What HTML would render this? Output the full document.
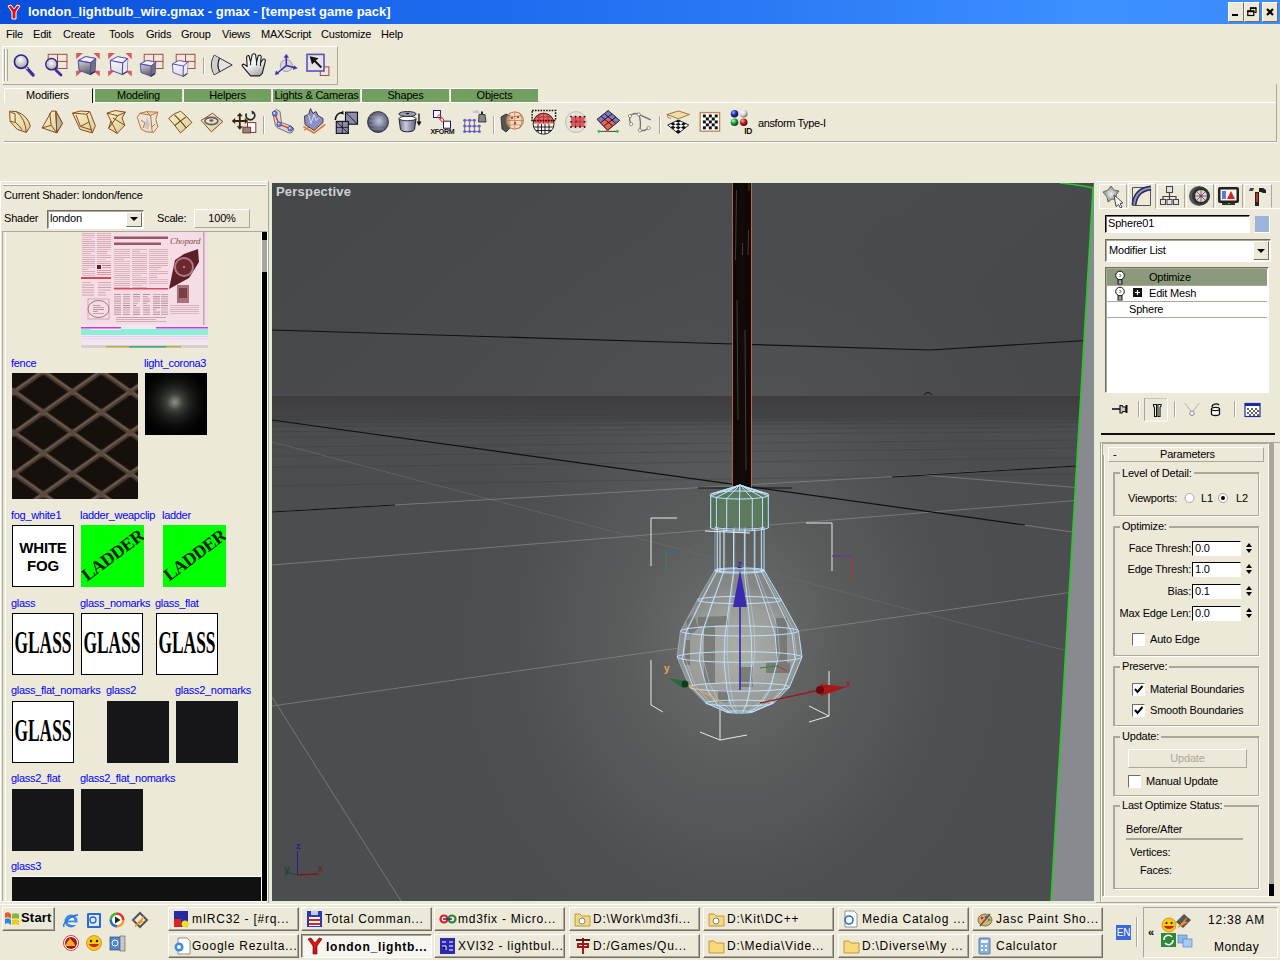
<!DOCTYPE html>
<html><head><meta charset="utf-8">
<style>
*{margin:0;padding:0;box-sizing:border-box}
html,body{width:1280px;height:960px;overflow:hidden;background:#ECE9D8;font-family:"Liberation Sans",sans-serif;font-size:11px;color:#000;position:relative;letter-spacing:-0.2px}
.a{position:absolute}
svg{display:block}
#title{left:0;top:0;width:1280px;height:24px;background:linear-gradient(90deg,#0a4ed9 0%,#1460e8 20%,#2a7af5 60%,#3d90ff 85%,#3b8cfc 100%)}
#title .t{left:28px;top:4px;color:#fff;font-weight:bold;font-size:13px;letter-spacing:0px;white-space:nowrap}
.wb{top:2px;width:16px;height:20px;background:#ECE9D8;border:1px solid;border-color:#fff #716f64 #716f64 #fff}
#menu span{position:absolute;top:28px;font-size:11px}
.tab{top:88px;width:88px;height:14px;background:#73a060;border-top:1px solid #fff;border-left:1px solid #fff;text-align:center;font-size:11px;line-height:13px;white-space:nowrap;letter-spacing:-0.2px}
#vp{left:272px;top:183px;width:822px;height:718px;background:#46484c;overflow:hidden}
.lbl{position:absolute;color:#0000ff;font-size:11px;white-space:nowrap;letter-spacing:-0.3px}
.lad{width:63px;height:62px;background:#00ff00;overflow:hidden}
.lad span{position:absolute;left:-10px;top:20px;width:84px;text-align:center;font-family:"Liberation Serif",serif;font-weight:bold;font-size:18px;color:#0a200a;transform:rotate(-37deg);letter-spacing:-0.5px}
.gls{width:62px;height:62px;background:#fff;border:1px solid #000;overflow:hidden}
.gls span{position:absolute;left:-40px;top:14px;width:140px;text-align:center;font-family:"Liberation Serif",serif;font-weight:bold;font-size:31px;line-height:30px;transform:scaleX(0.56);letter-spacing:0px;color:#000}
.drk{width:62px;height:62px;background:#161618}
.rtab{top:184px;width:28px;height:24px;border:1px solid;border-color:#fff #aca899 #ECE9D8 #fff}
.grp{left:1113px;width:147px;border:1px solid;border-color:#aca899 #fff #fff #aca899;box-shadow:1px 1px 0 #aca899 inset, -1px -1px 0 #aca899 inset}
.glbl{left:1120px;background:#ECE9D8;padding:0 2px}
.rl{right:89px;text-align:right;white-space:nowrap}
.sp{left:1192px;width:49px;height:15px;background:#fff;border:1px solid;border-color:#000 #fff #fff #000}
.spv{left:1195px}
.cb{width:13px;height:13px;background:#fff;border:1px solid;border-color:#716f64 #fff #fff #716f64}
.tbtn{width:131px;height:24px;background:#ECE9D8;border:1px solid;border-color:#fff #716f64 #716f64 #fff;box-shadow:inset -1px -1px 0 #aca899}
.tbtn.pr{background:#f6f5ef;border-color:#716f64 #fff #fff #716f64;box-shadow:inset 1px 1px 0 #aca899}
.tt{font-size:12px;white-space:nowrap;letter-spacing:0.75px}
</style></head><body>
<div id="title" class="a">
  <svg class="a" style="left:6px;top:4px" width="16" height="16" viewBox="0 0 16 16"><path d="M2 2l3-1 3 4 3-4 3 1-4 6v7h-4v-7z" fill="#e01010" stroke="#fff" stroke-width="1"/></svg>
  <div class="a t">london_lightbulb_wire.gmax - gmax - [tempest game pack]</div>
  <div class="a wb" style="left:1228px"></div>
  <div class="a wb" style="left:1244px"></div>
  <div class="a wb" style="left:1262px"></div>
  <svg class="a" style="left:1228px;top:2px" width="52" height="22" viewBox="1228 2 52 22"><rect x="1232" y="14" width="6" height="2" fill="#000"/>
  <path d="M1250.5 10.5v-2.5h5.5v4.5h-1.5" fill="none" stroke="#000" stroke-width="1.2"/><rect x="1250" y="7.3" width="6.3" height="1.6" fill="#000"/><rect x="1247.8" y="11" width="6" height="4.5" fill="#ECE9D8" stroke="#000" stroke-width="1.2"/><rect x="1247.2" y="10.4" width="7.2" height="1.8" fill="#000"/>
  <path d="M1267 9l6 6M1273 9l-6 6" stroke="#000" stroke-width="2.2"/></svg>
</div>
<div id="menu">
  <span style="left:6px">File</span><span style="left:33px">Edit</span><span style="left:63px">Create</span><span style="left:109px">Tools</span><span style="left:146px">Grids</span><span style="left:181px">Group</span><span style="left:222px">Views</span><span style="left:261px">MAXScript</span><span style="left:321px">Customize</span><span style="left:381px">Help</span>
</div>
<!-- toolbar -->
<div class="a" style="left:2px;top:46px;width:336px;height:39px;border:1px solid;border-color:#fff #aca899 #aca899 #fff"></div>
<div class="a" style="left:4px;top:49px;width:1px;height:32px;background:#aca899"></div>
<div class="a" style="left:5px;top:49px;width:1px;height:32px;background:#fff"></div>
<div class="a" style="left:7px;top:49px;width:1px;height:32px;background:#aca899"></div>
<svg class="a" style="left:0;top:44px" width="340" height="42" viewBox="0 44 340 42">
 <defs>
  <radialGradient id="gl" cx="0.45" cy="0.35" r="0.65"><stop offset="0" stop-color="#fafafa"/><stop offset="0.6" stop-color="#c8c8cc"/><stop offset="1" stop-color="#9a9aa4"/></radialGradient>
  <linearGradient id="cubeg" x1="0" y1="0" x2="0.3" y2="1"><stop offset="0" stop-color="#f0f0f4"/><stop offset="0.5" stop-color="#a8a8b0"/><stop offset="1" stop-color="#606068"/></linearGradient>
  <linearGradient id="cubew" x1="0" y1="0" x2="0.3" y2="1"><stop offset="0" stop-color="#ffffff"/><stop offset="1" stop-color="#dcdce4"/></linearGradient>
  <linearGradient id="hand" x1="0" y1="0" x2="0.5" y2="1"><stop offset="0" stop-color="#ffffff"/><stop offset="0.6" stop-color="#f0f0f0"/><stop offset="1" stop-color="#b0b0b0"/></linearGradient>
  <g id="cubeG"><path d="M0 3.9L7.4 0L17.6 1.9L16.8 14.8L12.1 18L0.8 13.7z" fill="url(#cubeg)" stroke="#5048b0" stroke-width="1"/><path d="M0 3.9L7.4 0L17.6 1.9L12.5 6.2z" fill="#f4f4f8" stroke="#5048b0" stroke-width="0.9"/><path d="M12.5 6.2L17.6 1.9L16.8 14.8L12.1 18z" fill="#707078"/><path d="M0 3.9L12.5 6.2L17.6 1.9M12.5 6.2L12.1 18" fill="none" stroke="#5048b0" stroke-width="1.1"/><path d="M12.1 18L16.8 14.8" stroke="#222" stroke-width="1.2"/></g>
  <g id="cubeW"><path d="M0 3.9L7.4 0L17.6 1.9L16.8 14.8L12.1 18L0.8 13.7z" fill="url(#cubew)" stroke="#5048b0" stroke-width="1"/><path d="M12.5 6.2L17.6 1.9L16.8 14.8L12.1 18z" fill="#e8e8ee"/><path d="M0 3.9L12.5 6.2L17.6 1.9M12.5 6.2L12.1 18" fill="none" stroke="#5048b0" stroke-width="1.1"/><path d="M12.1 18L16.8 14.8" stroke="#333" stroke-width="1.2"/></g>
  <g id="corn" fill="#d85a5a"><path d="M0 0h6.6l-6.6 6.3z"/><path d="M23.5 0h-6.3l6.3 6.3z"/><path d="M0 23.5v-5.8h6.3z"/><path d="M23.5 23.5v-5.8h-6.3z"/></g>
 </defs>
 <!-- 1 magnifier -->
 <line x1="26.9" y1="68.2" x2="33.2" y2="75.1" stroke="#3a30a0" stroke-width="3.2" stroke-linecap="round"/>
 <line x1="25.5" y1="66.8" x2="27.5" y2="69" stroke="#ddd" stroke-width="1.4"/>
 <circle cx="21.1" cy="61.7" r="6.7" fill="url(#gl)" stroke="#2a2490" stroke-width="1.6"/>
 <!-- 2 zoom all -->
 <g fill="none" stroke="#a84848" stroke-width="1"><rect x="48.2" y="54.3" width="18.8" height="14.2"/><line x1="57.5" y1="54.3" x2="57.5" y2="68.5"/><line x1="48.2" y1="61.4" x2="67" y2="61.4"/></g>
 <line x1="55.8" y1="69.9" x2="61" y2="75" stroke="#3a30a0" stroke-width="2.8" stroke-linecap="round"/>
 <circle cx="51.5" cy="64.2" r="5.7" fill="url(#gl)" fill-opacity="0.85" stroke="#2a2490" stroke-width="1.4"/>
 <!-- 3 cube extents -->
 <use href="#corn" x="76.2" y="53"/><use href="#cubeG" x="78.2" y="56.6"/>
 <!-- 4 white cube extents -->
 <use href="#corn" x="108.2" y="53"/><use href="#cubeW" x="110.2" y="56.6"/>
 <!-- 5 grid cube -->
 <g fill="none" stroke="#a84848" stroke-width="1"><rect x="144.2" y="54.3" width="18.8" height="14.2"/><line x1="153.6" y1="54.3" x2="153.6" y2="68.5"/><line x1="144.2" y1="61.4" x2="163" y2="61.4"/></g>
 <g transform="translate(140.3 60.5) scale(0.88)"><use href="#cubeG"/></g>
 <!-- 6 grid white cube -->
 <g fill="none" stroke="#a84848" stroke-width="1"><rect x="176.2" y="54.3" width="18.8" height="14.2"/><line x1="185.5" y1="54.3" x2="185.5" y2="68.5"/><line x1="176.2" y1="61.4" x2="195" y2="61.4"/></g>
 <g transform="translate(172.4 60.5) scale(0.88)"><use href="#cubeW"/></g>
 <!-- sep -->
 <line x1="203.5" y1="57" x2="203.5" y2="74" stroke="#aca899"/><line x1="204.5" y1="57" x2="204.5" y2="74" stroke="#fff"/>
 <!-- 7 cone -->
 <path d="M214.2 55.1L232.2 65L214.2 74.8Q208.5 65 214.2 55.1z" fill="#e2e2e2" stroke="#333" stroke-width="1"/>
 <path d="M214.2 55.6Q210.5 65 214.2 74.3L219.5 71.4Q217 65 219.5 58.5z" fill="#cfcfcf"/>
 <path d="M219.5 58.3Q216.5 65 219.5 71.7" fill="none" stroke="#222" stroke-width="1.3"/>
 <!-- 8 hand -->
 <path d="M250.6 75.9L242.6 66.4Q241.5 64.2 243.8 64.1L247.2 66.5L246.6 57.6Q246.9 55.2 248.9 55.5L250.6 62L252.2 54.9Q253.9 52.8 255.6 54.7L256.6 62L258.3 55.6Q260.5 54.4 261.2 56.6L260.5 63L263 59.2Q265.2 58.4 265.4 60.6L262.3 73.4L259.6 75.9z" fill="url(#hand)" stroke="#1a1a1a" stroke-width="1.1" stroke-linejoin="round"/>
 <path d="M250.6 62.3v3M256.6 62v3.5M260.5 63v3" stroke="#111" stroke-width="1"/>
 <!-- 9 axis -->
 <circle cx="286.3" cy="65.6" r="6" fill="#d6d6d6" stroke="#999" stroke-width="0.9"/>
 <g stroke="#3a30b0" stroke-width="1.5" fill="#3a30b0"><line x1="286.3" y1="65.6" x2="286.3" y2="57"/><line x1="286.3" y1="65.6" x2="295" y2="67.8"/><line x1="286.3" y1="65.6" x2="277.5" y2="73"/><path d="M286.3 54.2l-2.2 3.4h4.4z" stroke-width="0.5"/><path d="M297.3 68.1l-3.3-2.3-0.8 3.8z" stroke-width="0.5"/><path d="M275.2 74.7l1-3.8 2.6 2.8z" stroke-width="0.5"/></g>
 <!-- 10 select -->
 <rect x="320.3" y="66.9" width="8.6" height="8.6" fill="none" stroke="#a84848" stroke-width="1"/>
 <rect x="307" y="54.4" width="17" height="16.6" fill="#e4e4e4" stroke="#5a50c0" stroke-width="1.6"/>
 <path d="M309.7 56.2L318.5 58.2L315.8 60.6L322 66.8L320.6 68.2L314.4 62L312 64.6z" fill="#111"/>
</svg>
<!-- tabs -->
<div class="a" style="left:4px;top:88px;width:89px;height:15px;border-left:1px solid #fff;border-top:1px solid #fff;border-right:1px solid #111;background:#ECE9D8;z-index:2"></div>
<div class="a" style="left:26px;top:89px;font-size:11px;z-index:3">Modifiers</div>
<div class="a tab" style="left:94px">Modeling</div>
<div class="a tab" style="left:183px">Helpers</div>
<div class="a tab" style="left:272px">Lights &amp; Cameras</div>
<div class="a tab" style="left:361px">Shapes</div>
<div class="a tab" style="left:450px">Objects</div>
<div class="a" style="left:4px;top:102px;width:1272px;height:1px;background:#fff"></div>
<div class="a" style="left:4px;top:141px;width:1273px;height:1px;background:#aca899"></div>
<div class="a" style="left:4px;top:142px;width:1273px;height:1px;background:#fff"></div>
<div class="a" style="left:1276px;top:84px;width:1px;height:58px;background:#aca899"></div>
<div class="a" style="left:758px;top:117px;font-size:11px;white-space:nowrap;letter-spacing:-0.4px">ansform Type-I</div>

<svg class="a" style="left:0;top:104px" width="760" height="37" viewBox="0 104 760 37">
 <defs>
  <linearGradient id="yel" x1="0" y1="0" x2="1" y2="1"><stop offset="0" stop-color="#fbf3c8"/><stop offset="1" stop-color="#d8cc98"/></linearGradient>
  <radialGradient id="sph" cx="0.4" cy="0.35" r="0.7"><stop offset="0" stop-color="#d8dae6"/><stop offset="1" stop-color="#3c3e50"/></radialGradient>
 </defs>
 <g stroke="#8a4a20" stroke-width="1" fill="url(#yel)">
  <!-- bend -->
  <path d="M9.6 111.1L16.2 111.6Q28 115.5 30.4 126.3L26.3 132.4L17.2 129.4Q13 125 10.1 121.3z"/>
  <path d="M16.2 111.6Q25.5 118.5 26.3 132.4M10.6 112.5L15 113.5L15.2 122.3Q20 126 22 129.8M15.2 122.3L10.1 121.3" fill="none"/>
  <!-- taper -->
  <path d="M51.7 111.1L55.8 111.1L62.4 123.3L56.8 132.9L42.1 127.9z"/>
  <path d="M55.8 111.1L62.4 123.3L56.8 132.9z" fill="#b8b8a8"/>
  <path d="M49.7 113.1L51.2 125.3L42.1 127.9M51.2 125.3L56.8 132.9M55.8 111.1L56.8 132.9" fill="none"/>
  <!-- skew box -->
  <path d="M72.5 113.1L80.1 111.1L89.8 111.6L95.4 125.8L92.3 132.9L80.1 129.4z"/>
  <path d="M72.5 113.1L86.7 114.2L89.8 111.6M86.7 114.2L92.3 132.9M76 115L80.5 126.5L92 130M80.5 126.5L89 122" fill="none"/>
  <!-- twist -->
  <path d="M107 113.1L115.2 110.6L125.3 112.1L122 118L124.8 125.3L117.2 133.4L108.6 128.4L111 121z"/>
  <path d="M107 113.1L117.7 115.7L125.3 112.1M117.7 115.7L108.6 128.4M113 118L124.8 125.3M111 121L117.2 133.4" fill="none"/>
  <!-- noise -->
  <path d="M137.2 117.4L139.8 113.3L146.5 111.7L157.8 112.2L155.8 119.5L157.8 126.7L153.7 132.4L146.5 131.8L141.3 129.3L139.3 123.6z" fill="#e8e6d8" stroke="#c07030"/>
  <path d="M146.5 111.7L150.6 115.3L152.2 131.8M139.8 113.3L150.6 115.3L157.8 112.2M141 120l4 3-2 5M155 124l-3 3" fill="none" stroke="#c07030"/>
  <path d="M147 117l3 8-2 5l-4-3z" fill="#c8c8c0" stroke="none"/>
  <!-- ffd -->
  <path d="M168.7 118.4Q174 113 180.5 111.2Q187 116 191.9 122.6Q186 128 180.5 132.9Q174 124 168.7 118.4z"/>
  <path d="M174.5 114.8Q180 120 186.2 127.8M186.2 116.9Q180 121 174.6 125.7" fill="none" stroke="#6a4020" stroke-width="1.1"/>
  <!-- ripple -->
  <path d="M201.1 120.5L212.5 113.3L222.8 121.5L211.4 131.8z"/>
 </g>
 <ellipse cx="211.4" cy="121" rx="6.5" ry="3.6" fill="none" stroke="#585878" stroke-width="1.6"/>
 <ellipse cx="211.4" cy="120.5" rx="2" ry="1.2" fill="#585878"/>
 <!-- xform -->
 <g stroke="#3a2410" stroke-width="1.8" fill="#3a2410"><path d="M233.6 121h12.6M239.8 114.8v13" fill="none"/><path d="M232 121l3-2.5v5z" stroke-width="0.5"/><path d="M248 121l-3-2.5v5z" stroke-width="0.5"/><path d="M239.8 113l-2.5 3h5z" stroke-width="0.5"/><path d="M239.8 129.5l-2.5-3h5z" stroke-width="0.5"/></g>
 <path d="M246.5 113.5A4.3 4.3 0 1 0 253.5 112.5" fill="none" stroke="#222" stroke-width="1.6"/><path d="M251.5 110.5l3 1.5-2.5 2.5z" fill="#222"/>
 <rect x="247.5" y="122.6" width="8.3" height="9.8" fill="#fff" stroke="#8a3030" stroke-width="1"/><rect x="242.9" y="127.2" width="7.7" height="5.7" fill="#8a8a78" stroke="#8a3030" stroke-width="1"/>
 <line x1="263.5" y1="116" x2="263.5" y2="134" stroke="#aca899"/><line x1="264.5" y1="116" x2="264.5" y2="134" stroke="#fff"/>
 <!-- linked xform bones -->
 <path d="M272.5 112l4-2.5 3.5 2 1.5 11 9.5 3.5 3 3-2 3.5-3 .5-12-5.5-1.5-2z" fill="#d8d8d0" stroke="#666" stroke-width="0.9"/>
 <path d="M274.8 113.7l4.3 10.6 11.2 4.4" fill="none" stroke="#e03030" stroke-width="1.4"/>
 <g fill="#7878e8" stroke="#2a2a80" stroke-width="0.6"><circle cx="274.8" cy="113.7" r="2.4"/><circle cx="279.1" cy="124.3" r="2.4"/><circle cx="290.3" cy="128.7" r="2.4"/></g>
 <g fill="#e8e8ff"><circle cx="274.2" cy="113" r="0.9"/><circle cx="278.5" cy="123.6" r="0.9"/><circle cx="289.7" cy="128" r="0.9"/></g>
 <!-- displace -->
 <path d="M303.4 126.5l10.5 6.5 11.3-8.5" fill="none" stroke="#e07a30" stroke-width="1.6"/><path d="M304 130.2l5-3" stroke="#e07a30" stroke-width="1.3"/>
 <path d="M304.5 116l4-1.5 2-6 2.5 5 3-2 2 4 5 3v4l-9 8-9-6z" fill="#8c90c0" stroke="#222" stroke-width="0.8"/>
 <path d="M308.5 114.5l2.5 9 3-9 2 6 3-3" fill="none" stroke="#d8dcf8" stroke-width="1"/>
 <!-- mesh select -->
 <path d="M335.3 120c0-4 3-7.5 6.5-7.5" fill="none" stroke="#111" stroke-width="1.5"/><path d="M343.2 110.6l0.5 4-3.5-1z" fill="#111"/>
 <rect x="345.5" y="112.2" width="12" height="12" fill="#8a8cae" stroke="#111" stroke-width="1.1"/><path d="M345.5 112.2l12 12" stroke="#111" stroke-width="0.9"/>
 <rect x="336.3" y="121.4" width="12" height="12" fill="#8a8cae" stroke="#111" stroke-width="1.1"/><path d="M342.3 121.4v12M336.3 127.4h12M336.3 121.4l6 6M342.3 127.4l6 6" stroke="#111" stroke-width="0.8"/>
 <!-- sphere -->
 <defs><radialGradient id="sph2" cx="0.55" cy="0.45" r="0.6"><stop offset="0" stop-color="#c8cadc"/><stop offset="0.5" stop-color="#7a7c98"/><stop offset="1" stop-color="#3a3c50"/></radialGradient></defs>
 <circle cx="378" cy="122" r="10.5" fill="url(#sph2)" stroke="#2a2a3a" stroke-width="0.8"/>
 <path d="M370 117h14M369 121h17M369 125h17M371 129h13" stroke="#b0b2c8" stroke-width="0.6" opacity="0.6"/>
 <!-- cylinder -->
 <defs><linearGradient id="cyl" x1="0" y1="0" x2="1" y2="0"><stop offset="0" stop-color="#6a6c88"/><stop offset="0.4" stop-color="#c8cadc"/><stop offset="1" stop-color="#5a5c78"/></linearGradient></defs>
 <path d="M399 118.5l1.5 11c1 3 13 3 14 0l1.5-11z" fill="url(#cyl)" stroke="#222" stroke-width="1"/>
 <ellipse cx="407.5" cy="118.5" rx="8.5" ry="2.2" fill="#fff" stroke="#222" stroke-width="0.9"/>
 <ellipse cx="407.5" cy="114" rx="8.6" ry="2.5" fill="#9a9cb8" stroke="#222" stroke-width="0.9"/><ellipse cx="407.5" cy="113.6" rx="2" ry="0.8" fill="#222"/>
 <path d="M419 113.5v9" stroke="#111" stroke-width="1.3"/><path d="M416.5 121.5l2.5 4.5 2.5-4.5z" fill="#111"/>
 <!-- xform chain -->
 <rect x="433.5" y="110.5" width="6.9" height="7" fill="#fff" stroke="#1a1a70" stroke-width="1"/><rect x="443.5" y="121.2" width="7" height="7" fill="#fff" stroke="#1a1a70" stroke-width="1"/>
 <ellipse cx="439.5" cy="117" rx="1.5" ry="2.2" transform="rotate(-40 439.5 117)" fill="none" stroke="#d03030" stroke-width="0.9"/><ellipse cx="442" cy="119.8" rx="1.5" ry="2.2" transform="rotate(-40 442 119.8)" fill="none" stroke="#d03030" stroke-width="0.9"/>
 <text x="430.5" y="134" font-size="7" font-weight="bold" font-family="Liberation Sans" letter-spacing="-0.3" fill="#111">XFORM</text>
 <!-- vol select -->
 <path d="M471 112l7 -2 2 4z" fill="#b8b8e8" opacity="0.8"/>
 <path d="M464.7 120.2h9.7M464.7 126.1h14.6M464.7 131.5h14.6M464.7 120.2v11.3M469.6 120.2v11.3M474.4 120.2v11.3M479.3 126.1v5.4" stroke="#222" stroke-width="0.6"/>
 <g fill="#6a5ae0"><circle cx="464.7" cy="120.2" r="1.5"/><circle cx="469.6" cy="120.2" r="1.5"/><circle cx="474.4" cy="120.2" r="1.5"/><circle cx="464.7" cy="126.1" r="1.5"/><circle cx="469.6" cy="126.1" r="1.5"/><circle cx="474.4" cy="126.1" r="1.5"/><circle cx="479.3" cy="126.1" r="1.5"/><circle cx="464.7" cy="131.5" r="1.5"/><circle cx="469.6" cy="131.5" r="1.5"/><circle cx="474.4" cy="131.5" r="1.5"/><circle cx="479.3" cy="131.5" r="1.5"/></g>
 <path d="M479 114.5h6l1 7.5h-7.5z" fill="#888" stroke="#222" stroke-width="0.8"/><rect x="481" y="111.5" width="2" height="2.5" fill="#222"/>
 <line x1="493.5" y1="116" x2="493.5" y2="134" stroke="#aca899"/><line x1="494.5" y1="116" x2="494.5" y2="134" stroke="#fff"/>
 <!-- uvw map sphere -->
 <path d="M501 117l5-3 4 2v12l-4 4-4-3z" fill="#555" stroke="#222" stroke-width="0.8"/>
 <circle cx="514.8" cy="120.5" r="8.6" fill="#e8dcc8" fill-opacity="0.7" stroke="#c07030" stroke-width="1"/>
 <path d="M506.2 120.5h17.2M514.8 111.9v17.2M508 115c4 2 10 2 13.5 0M508 126c4-2 10-2 13.5 0M510 112.5c-3 5-3 11 0 16M519.5 112.5c3 5 3 11 0 16" fill="none" stroke="#c07030" stroke-width="0.7"/>
 <g fill="#e03030"><circle cx="512" cy="118" r="1.2"/><circle cx="518" cy="117" r="1.2"/><circle cx="515" cy="123" r="1.2"/></g>
 <!-- unwrap sphere -->
 <defs><clipPath id="uwT"><path d="M533.1 123.7a10.5 10.5 0 0 1 21 0z"/></clipPath><clipPath id="uwB"><path d="M533.1 123.7a10.5 10.5 0 0 0 21 0z"/></clipPath></defs>
 <circle cx="543.6" cy="123.7" r="10.5" fill="#e86868" clip-path="url(#uwT)"/>
 <circle cx="543.6" cy="123.7" r="10.5" fill="#f4f4f4" clip-path="url(#uwB)"/>
 <g clip-path="url(#uwT)" stroke="#c02020" stroke-width="0.8" fill="none"><path d="M533 117h21M533 121h21M539 113v11M543.6 113v11M548 113v11"/></g>
 <g clip-path="url(#uwB)" stroke="#111" stroke-width="0.9" fill="none"><path d="M533 127h21M533 130.5h21M538 124v11M541.5 124v11M545 124v11M549 124v11"/></g>
 <circle cx="543.6" cy="123.7" r="10.5" fill="none" stroke="#111" stroke-width="0.9"/>
 <rect x="532.1" y="110.6" width="23.5" height="9.8" fill="none" stroke="#111" stroke-width="1.5" stroke-dasharray="1.6 1.2"/>
 <!-- mesh smooth -->
 <circle cx="575.9" cy="122" r="10.4" fill="#e8e6dc" stroke="#b0b0a8" stroke-width="0.8"/>
 <path d="M576 112v20M566 122h20M568 116h16M568 128h16" stroke="#c8c8c0" stroke-width="0.5"/>
 <rect x="571" y="116.6" width="13.6" height="10.4" fill="#e85858"/>
 <path d="M575.5 116.6v10.4M580 116.6v10.4M571 121.8h13.6" stroke="#a03030" stroke-width="0.6"/>
 <g fill="#111"><circle cx="571" cy="116.6" r="0.9"/><circle cx="575.5" cy="116.6" r="0.9"/><circle cx="580" cy="116.6" r="0.9"/><circle cx="584.6" cy="116.6" r="0.9"/><circle cx="571" cy="121.8" r="0.9"/><circle cx="584.6" cy="121.8" r="0.9"/><circle cx="571" cy="127" r="0.9"/><circle cx="575.5" cy="127" r="0.9"/><circle cx="580" cy="127" r="0.9"/><circle cx="584.6" cy="127" r="0.9"/></g>
 <circle cx="576.5" cy="121.5" r="1" fill="#3030e0"/>
 <!-- patch -->
 <path d="M597.2 119.3L608.2 110.6L619.6 120.4L607.6 130.3z" fill="#e86060" stroke="#222" stroke-width="0.8"/>
 <path d="M597.2 119.3L608.2 110.6L619.6 120.4L616 123.6L608.2 116.8L600.9 122.4z" fill="#7a78c8"/>
 <path d="M601 116.2L612.5 125.8M604.7 113.8L616 123.6M600.9 122.4L612 113.9M604.5 125.5L615.9 117.1" stroke="#111" stroke-width="0.9"/>
 <path d="M597.2 119.3L608.2 110.6L619.6 120.4L607.6 130.3z" fill="none" stroke="#222" stroke-width="0.8"/>
 <path d="M598.9 131.4h18.5" stroke="#333" stroke-width="0.9"/><circle cx="598.9" cy="131.4" r="1.4" fill="#30c030"/><circle cx="617.4" cy="131.4" r="1.4" fill="#30c030"/><circle cx="607.6" cy="130.8" r="1.4" fill="#e04040"/>
 <!-- spline -->
 <path d="M630 116c3-3 6-3 8.8-1.6M630 116c-1 3 0 6 1.1 8.2M638.8 114.4c2 5 2 10 1.1 15.9M639.9 130.3c3 1 6 0 8.7-2.3M638.8 114.4l12 5.5" fill="none" stroke="#707070" stroke-width="1.3"/>
 <g fill="#fff" stroke="#808080" stroke-width="0.9"><circle cx="630" cy="116" r="1.6"/><circle cx="638.8" cy="114.4" r="1.6"/><circle cx="631.1" cy="124.2" r="1.6"/><circle cx="639.9" cy="130.3" r="1.6"/><circle cx="648.6" cy="128" r="1.6"/></g>
 <line x1="659.5" y1="116" x2="659.5" y2="134" stroke="#aca899"/><line x1="660.5" y1="116" x2="660.5" y2="134" stroke="#fff"/>
 <!-- layers -->
 <path d="M667.7 125L678.3 120L688.8 125L678.3 133.5z" fill="#fff" stroke="#111" stroke-width="0.9"/>
 <g fill="#111"><path d="M678.3 120.0 L680.9 121.2 L678.3 122.7 L675.6 121.2 z"/><path d="M673.0 122.5 L675.6 124.2 L673.0 125.7 L670.4 123.8 z"/><path d="M678.3 122.7 L680.9 124.2 L678.2 125.9 L675.6 124.2 z"/><path d="M673.0 125.7 L675.6 127.6 L673.0 129.2 L670.3 127.1 z"/><path d="M683.5 122.5 L686.2 123.8 L683.5 125.7 L680.9 124.2 z"/><path d="M678.2 125.9 L680.9 127.6 L678.2 129.5 L675.6 127.6 z"/><path d="M683.5 125.7 L686.1 127.1 L683.5 129.2 L680.9 127.6 z"/><path d="M678.2 129.5 L680.9 131.4 L678.2 133.5 L675.6 131.4 z"/></g>
 <path d="M667 114.5L678.3 111L689.5 114.5L678.3 118.8z" fill="#f4dca8" stroke="#9a6a30" stroke-width="0.9"/><path d="M667 114.5l1 3 3 1" fill="none" stroke="#9a6a30" stroke-width="0.8"/>
 <!-- checker -->
 <rect x="700.2" y="112.6" width="19.4" height="18.6" fill="#fff" stroke="#c08a60" stroke-width="1.4"/>
 <g fill="#111"><rect x="702.90" y="114.50" width="2.96" height="2.96"/><rect x="702.90" y="120.42" width="2.96" height="2.96"/><rect x="702.90" y="126.34" width="2.96" height="2.96"/><rect x="705.86" y="117.46" width="2.96" height="2.96"/><rect x="705.86" y="123.38" width="2.96" height="2.96"/><rect x="708.82" y="114.50" width="2.96" height="2.96"/><rect x="708.82" y="120.42" width="2.96" height="2.96"/><rect x="708.82" y="126.34" width="2.96" height="2.96"/><rect x="711.78" y="117.46" width="2.96" height="2.96"/><rect x="711.78" y="123.38" width="2.96" height="2.96"/><rect x="714.74" y="114.50" width="2.96" height="2.96"/><rect x="714.74" y="120.42" width="2.96" height="2.96"/><rect x="714.74" y="126.34" width="2.96" height="2.96"/></g>
 <!-- material id -->
 <defs>
  <radialGradient id="bB" cx="0.35" cy="0.3" r="0.7"><stop offset="0" stop-color="#a0b0ff"/><stop offset="0.5" stop-color="#2030b0"/><stop offset="1" stop-color="#081050"/></radialGradient>
  <radialGradient id="bW" cx="0.35" cy="0.3" r="0.7"><stop offset="0" stop-color="#fff"/><stop offset="0.6" stop-color="#d0d0d0"/><stop offset="1" stop-color="#707070"/></radialGradient>
  <radialGradient id="bG" cx="0.35" cy="0.3" r="0.7"><stop offset="0" stop-color="#b0ffc0"/><stop offset="0.5" stop-color="#20a040"/><stop offset="1" stop-color="#084018"/></radialGradient>
  <radialGradient id="bR" cx="0.35" cy="0.3" r="0.7"><stop offset="0" stop-color="#ffb0b0"/><stop offset="0.5" stop-color="#c02020"/><stop offset="1" stop-color="#500808"/></radialGradient>
 </defs>
 <circle cx="734.5" cy="113.8" r="3.8" fill="url(#bB)"/><circle cx="743.7" cy="113.8" r="3.8" fill="url(#bW)"/>
 <circle cx="734.5" cy="122.3" r="3.8" fill="url(#bG)"/><circle cx="743.7" cy="122.3" r="3.8" fill="url(#bR)"/>
 <text x="744.2" y="134" font-size="8.5" font-weight="bold" font-family="Liberation Sans" fill="#111">ID</text>
</svg>

<!-- left panel frame -->
<div class="a" style="left:0;top:181px;width:269px;height:1px;background:#fff"></div>
<div class="a" style="left:0;top:181px;width:1px;height:722px;background:#fff"></div>
<div class="a" style="left:268px;top:181px;width:1px;height:722px;background:#aca899"></div>
<div class="a" style="left:3px;top:184px;width:263px;height:1px;background:#fff"></div>
<div class="a" style="left:3px;top:185px;width:263px;height:1px;background:#aca899"></div>
<div class="a" style="left:4px;top:189px;white-space:nowrap">Current Shader: london/fence</div>
<div class="a" style="left:4px;top:212px">Shader</div>
<div class="a" style="left:47px;top:210px;width:97px;height:19px;background:#fff;border:1px solid;border-color:#716f64 #fff #fff #716f64;box-shadow:inset 1px 1px 0 #aca899"></div>
<div class="a" style="left:50px;top:212px">london</div>
<div class="a" style="left:126px;top:212px;width:16px;height:15px;background:#ECE9D8;border:1px solid;border-color:#fff #716f64 #716f64 #fff"></div>
<svg class="a" style="left:130px;top:217px" width="9" height="5"><path d="M0 0h8l-4 4z" fill="#000"/></svg>
<div class="a" style="left:157px;top:212px">Scale:</div>
<div class="a" style="left:194px;top:209px;width:56px;height:19px;border:1px solid;border-color:#fff #aca899 #aca899 #fff;text-align:center;line-height:17px">100%</div>
<!-- list frame -->
<div class="a" style="left:2px;top:231px;width:265px;height:1px;background:#aca899"></div>
<div class="a" style="left:2px;top:231px;width:1px;height:671px;background:#aca899"></div>
<div class="a" style="left:5px;top:232px;width:1px;height:669px;background:#fff"></div>
<div class="a" style="left:2px;top:901px;width:265px;height:1px;background:#fff"></div>
<div class="a" style="left:261px;top:232px;width:1px;height:669px;background:#fff"></div>
<div class="a" style="left:262px;top:232px;width:5px;height:669px;background:#000"></div>
<div class="a" style="left:262px;top:240px;width:5px;height:32px;background:#a8a698"></div>
<div class="a" style="left:267px;top:232px;width:1px;height:669px;background:#fff"></div>
<!-- clip area -->
<div class="a" style="left:6px;top:232px;width:255px;height:669px;overflow:hidden">
 <div class="a" style="left:-6px;top:-232px;width:270px;height:1000px">
  <!-- newspaper -->
  <div class="a" style="left:81px;top:232px;width:127px;height:116px;overflow:hidden"><svg width="127" height="116" viewBox="0 0 127 116"><rect width="127" height="116" fill="#f6dce4"/><rect x="1.0" y="1.0" width="13.0" height="1" fill="#c8949f" opacity="0.61"/><rect x="1.0" y="3.0" width="13.0" height="1" fill="#c8949f" opacity="0.63"/><rect x="1.0" y="5.0" width="13.0" height="1" fill="#c8949f" opacity="0.47"/><rect x="1.0" y="7.0" width="9.6" height="1" fill="#c8949f" opacity="0.53"/><rect x="1.0" y="9.0" width="13.0" height="1" fill="#c8949f" opacity="0.75"/><rect x="1.0" y="11.0" width="13.0" height="1" fill="#c8949f" opacity="0.70"/><rect x="1.0" y="13.0" width="13.0" height="1" fill="#c8949f" opacity="0.64"/><rect x="1.0" y="15.0" width="13.0" height="1" fill="#c8949f" opacity="0.64"/><rect x="1.0" y="17.0" width="13.0" height="1" fill="#c8949f" opacity="0.61"/><rect x="1.0" y="19.0" width="13.0" height="1" fill="#c8949f" opacity="0.65"/><rect x="1.0" y="21.0" width="9.1" height="1" fill="#c8949f" opacity="0.63"/><rect x="1.0" y="23.0" width="13.0" height="1" fill="#c8949f" opacity="0.46"/><rect x="1.0" y="25.0" width="13.0" height="1" fill="#c8949f" opacity="0.59"/><rect x="1.0" y="27.0" width="13.0" height="1" fill="#c8949f" opacity="0.71"/><rect x="1.0" y="29.0" width="13.0" height="1" fill="#c8949f" opacity="0.73"/><rect x="1.0" y="31.0" width="13.0" height="1" fill="#c8949f" opacity="0.69"/><rect x="1.0" y="33.0" width="13.0" height="1" fill="#c8949f" opacity="0.73"/><rect x="1.0" y="35.0" width="13.0" height="1" fill="#c8949f" opacity="0.48"/><rect x="1.0" y="37.0" width="6.3" height="1" fill="#c8949f" opacity="0.74"/><rect x="1.0" y="39.0" width="13.0" height="1" fill="#c8949f" opacity="0.64"/><rect x="1.0" y="41.0" width="13.0" height="1" fill="#c8949f" opacity="0.60"/><rect x="1.0" y="43.0" width="13.0" height="1" fill="#c8949f" opacity="0.56"/><rect x="16.0" y="1.0" width="14.0" height="1" fill="#c8949f" opacity="0.63"/><rect x="16.0" y="3.0" width="14.0" height="1" fill="#c8949f" opacity="0.65"/><rect x="16.0" y="5.0" width="14.0" height="1" fill="#c8949f" opacity="0.71"/><rect x="16.0" y="7.0" width="14.0" height="1" fill="#c8949f" opacity="0.65"/><rect x="16.0" y="9.0" width="14.0" height="1" fill="#c8949f" opacity="0.71"/><rect x="16.0" y="11.0" width="14.0" height="1" fill="#c8949f" opacity="0.72"/><rect x="16.0" y="13.0" width="14.0" height="1" fill="#c8949f" opacity="0.66"/><rect x="16.0" y="15.0" width="14.0" height="1" fill="#c8949f" opacity="0.70"/><rect x="16.0" y="17.0" width="14.0" height="1" fill="#c8949f" opacity="0.54"/><rect x="16.0" y="19.0" width="10.4" height="1" fill="#c8949f" opacity="0.75"/><rect x="16.0" y="21.0" width="10.1" height="1" fill="#c8949f" opacity="0.57"/><rect x="16.0" y="23.0" width="14.0" height="1" fill="#c8949f" opacity="0.54"/><rect x="16.0" y="25.0" width="14.0" height="1" fill="#c8949f" opacity="0.71"/><rect x="16.0" y="27.0" width="9.0" height="1" fill="#c8949f" opacity="0.46"/><rect x="16.0" y="29.0" width="14.0" height="1" fill="#c8949f" opacity="0.55"/><rect x="16.0" y="31.0" width="14.0" height="1" fill="#c8949f" opacity="0.74"/><rect x="16" y="33" width="4" height="4" fill="#5a2030"/><rect x="21.0" y="33.0" width="9.0" height="1" fill="#b06070" opacity="0.75"/><rect x="21.0" y="35.0" width="9.0" height="1" fill="#b06070" opacity="0.47"/><rect x="16.0" y="38.0" width="14.0" height="1" fill="#c05868" opacity="0.46"/><rect x="16.0" y="40.0" width="14.0" height="1" fill="#c05868" opacity="0.57"/><rect x="16.0" y="42.0" width="14.0" height="1" fill="#c05868" opacity="0.50"/><rect x="0" y="45" width="30" height="2" fill="#d84858"/><rect x="1.0" y="50.0" width="9.0" height="1" fill="#b88a96" opacity="0.54"/><rect x="1.0" y="52.5" width="12.0" height="1" fill="#b88a96" opacity="0.72"/><rect x="1.0" y="55.0" width="12.0" height="1" fill="#b88a96" opacity="0.59"/><rect x="1.0" y="57.5" width="12.0" height="1" fill="#b88a96" opacity="0.64"/><rect x="1.0" y="60.0" width="12.0" height="1" fill="#b88a96" opacity="0.62"/><rect x="1.0" y="62.5" width="12.0" height="1" fill="#b88a96" opacity="0.73"/><rect x="17.0" y="50.0" width="13.0" height="1" fill="#b88a96" opacity="0.58"/><rect x="17.0" y="52.5" width="13.0" height="1" fill="#b88a96" opacity="0.52"/><rect x="17.0" y="55.0" width="13.0" height="1" fill="#b88a96" opacity="0.74"/><rect x="17.0" y="57.5" width="13.0" height="1" fill="#b88a96" opacity="0.61"/><rect x="17.0" y="60.0" width="7.4" height="1" fill="#b88a96" opacity="0.62"/><rect x="17.0" y="62.5" width="8.4" height="1" fill="#b88a96" opacity="0.64"/><ellipse cx="17.5" cy="77" rx="10.5" ry="8.5" fill="none" stroke="#8a5a66" stroke-width="0.8"/><rect x="12.0" y="73.0" width="7.2" height="1" fill="#9a6a76" opacity="0.59"/><rect x="12.0" y="75.0" width="11.0" height="1" fill="#9a6a76" opacity="0.56"/><rect x="12.0" y="77.0" width="11.0" height="1" fill="#9a6a76" opacity="0.67"/><rect x="12.0" y="79.0" width="4.7" height="1" fill="#9a6a76" opacity="0.65"/><rect x="12.0" y="81.0" width="11.0" height="1" fill="#9a6a76" opacity="0.53"/><rect x="7" y="67" width="21" height="20" fill="none" stroke="#b08a94" stroke-width="0.6"/><g fill="#8a4050" opacity="0.85"><rect x="33" y="4.5" width="54" height="2.5"/><rect x="33" y="10.5" width="47" height="2.5"/></g><rect x="33.0" y="17.0" width="16.0" height="1" fill="#c8949f" opacity="0.63"/><rect x="33.0" y="19.0" width="16.0" height="1" fill="#c8949f" opacity="0.56"/><rect x="33.0" y="21.0" width="16.0" height="1" fill="#c8949f" opacity="0.56"/><rect x="33.0" y="23.0" width="16.0" height="1" fill="#c8949f" opacity="0.54"/><rect x="33.0" y="25.0" width="16.0" height="1" fill="#c8949f" opacity="0.68"/><rect x="33.0" y="27.0" width="10.0" height="1" fill="#c8949f" opacity="0.67"/><rect x="33.0" y="29.0" width="16.0" height="1" fill="#c8949f" opacity="0.52"/><rect x="33.0" y="31.0" width="16.0" height="1" fill="#c8949f" opacity="0.52"/><rect x="33.0" y="33.0" width="16.0" height="1" fill="#c8949f" opacity="0.58"/><rect x="33.0" y="35.0" width="16.0" height="1" fill="#c8949f" opacity="0.48"/><rect x="33.0" y="37.0" width="16.0" height="1" fill="#c8949f" opacity="0.55"/><rect x="33.0" y="39.0" width="16.0" height="1" fill="#c8949f" opacity="0.58"/><rect x="33.0" y="41.0" width="16.0" height="1" fill="#c8949f" opacity="0.50"/><rect x="33.0" y="43.0" width="16.0" height="1" fill="#c8949f" opacity="0.65"/><rect x="33.0" y="45.0" width="16.0" height="1" fill="#c8949f" opacity="0.59"/><rect x="33.0" y="47.0" width="16.0" height="1" fill="#c8949f" opacity="0.49"/><rect x="33.0" y="49.0" width="16.0" height="1" fill="#c8949f" opacity="0.51"/><rect x="33.0" y="51.0" width="16.0" height="1" fill="#c8949f" opacity="0.70"/><rect x="33.0" y="53.0" width="16.0" height="1" fill="#c8949f" opacity="0.53"/><rect x="33.0" y="55.0" width="16.0" height="1" fill="#c8949f" opacity="0.64"/><rect x="51.0" y="17.0" width="15.0" height="1" fill="#c8949f" opacity="0.55"/><rect x="51.0" y="19.0" width="7.8" height="1" fill="#c8949f" opacity="0.69"/><rect x="51.0" y="21.0" width="15.0" height="1" fill="#c8949f" opacity="0.55"/><rect x="51.0" y="23.0" width="15.0" height="1" fill="#c8949f" opacity="0.58"/><rect x="51.0" y="25.0" width="15.0" height="1" fill="#c8949f" opacity="0.73"/><rect x="51.0" y="27.0" width="15.0" height="1" fill="#c8949f" opacity="0.45"/><rect x="51.0" y="29.0" width="15.0" height="1" fill="#c8949f" opacity="0.71"/><rect x="51.0" y="31.0" width="15.0" height="1" fill="#c8949f" opacity="0.58"/><rect x="51.0" y="33.0" width="15.0" height="1" fill="#c8949f" opacity="0.73"/><rect x="51.0" y="35.0" width="15.0" height="1" fill="#c8949f" opacity="0.67"/><rect x="51.0" y="37.0" width="15.0" height="1" fill="#c8949f" opacity="0.65"/><rect x="51.0" y="39.0" width="15.0" height="1" fill="#c8949f" opacity="0.54"/><rect x="51.0" y="41.0" width="15.0" height="1" fill="#c8949f" opacity="0.52"/><rect x="51.0" y="43.0" width="9.5" height="1" fill="#c8949f" opacity="0.54"/><rect x="51.0" y="45.0" width="15.0" height="1" fill="#c8949f" opacity="0.46"/><rect x="51.0" y="47.0" width="15.0" height="1" fill="#c8949f" opacity="0.66"/><rect x="51.0" y="49.0" width="15.0" height="1" fill="#c8949f" opacity="0.72"/><rect x="51.0" y="51.0" width="15.0" height="1" fill="#c8949f" opacity="0.62"/><rect x="51.0" y="53.0" width="10.5" height="1" fill="#c8949f" opacity="0.50"/><rect x="51.0" y="55.0" width="15.0" height="1" fill="#c8949f" opacity="0.65"/><rect x="68.0" y="17.0" width="19.0" height="1" fill="#c8949f" opacity="0.57"/><rect x="68.0" y="19.0" width="19.0" height="1" fill="#c8949f" opacity="0.63"/><rect x="68.0" y="21.0" width="19.0" height="1" fill="#c8949f" opacity="0.53"/><rect x="68.0" y="23.0" width="19.0" height="1" fill="#c8949f" opacity="0.59"/><rect x="68.0" y="25.0" width="19.0" height="1" fill="#c8949f" opacity="0.56"/><rect x="68.0" y="27.0" width="19.0" height="1" fill="#c8949f" opacity="0.61"/><rect x="68.0" y="29.0" width="19.0" height="1" fill="#c8949f" opacity="0.50"/><rect x="68.0" y="31.0" width="19.0" height="1" fill="#c8949f" opacity="0.73"/><rect x="68.0" y="33.0" width="19.0" height="1" fill="#c8949f" opacity="0.70"/><rect x="68.0" y="35.0" width="12.4" height="1" fill="#c8949f" opacity="0.71"/><rect x="68.0" y="37.0" width="9.7" height="1" fill="#c8949f" opacity="0.53"/><rect x="68.0" y="39.0" width="19.0" height="1" fill="#c8949f" opacity="0.58"/><rect x="68.0" y="41.0" width="19.0" height="1" fill="#c8949f" opacity="0.68"/><rect x="68.0" y="43.0" width="8.0" height="1" fill="#c8949f" opacity="0.49"/><rect x="68.0" y="45.0" width="8.1" height="1" fill="#c8949f" opacity="0.74"/><rect x="68.0" y="47.0" width="19.0" height="1" fill="#c8949f" opacity="0.48"/><rect x="68.0" y="49.0" width="19.0" height="1" fill="#c8949f" opacity="0.54"/><rect x="68.0" y="51.0" width="19.0" height="1" fill="#c8949f" opacity="0.56"/><rect x="33" y="56" width="54" height="1.5" fill="#d84858"/><rect x="33.0" y="62.0" width="7.0" height="1" fill="#9a6a78" opacity="0.63"/><rect x="33.0" y="64.2" width="7.0" height="1" fill="#9a6a78" opacity="0.51"/><rect x="33.0" y="66.4" width="7.0" height="1" fill="#9a6a78" opacity="0.49"/><rect x="33.0" y="68.6" width="7.0" height="1" fill="#9a6a78" opacity="0.66"/><rect x="33.0" y="70.8" width="7.0" height="1" fill="#9a6a78" opacity="0.47"/><rect x="33.0" y="73.0" width="7.0" height="1" fill="#9a6a78" opacity="0.56"/><rect x="33.0" y="75.2" width="7.0" height="1" fill="#9a6a78" opacity="0.68"/><rect x="33.0" y="77.4" width="7.0" height="1" fill="#9a6a78" opacity="0.69"/><rect x="33.0" y="79.6" width="7.0" height="1" fill="#9a6a78" opacity="0.58"/><rect x="33.0" y="81.8" width="7.0" height="1" fill="#9a6a78" opacity="0.60"/><rect x="42.0" y="62.0" width="7.0" height="1" fill="#9a6a78" opacity="0.58"/><rect x="42.0" y="64.2" width="7.0" height="1" fill="#9a6a78" opacity="0.59"/><rect x="42.0" y="66.4" width="7.0" height="1" fill="#9a6a78" opacity="0.61"/><rect x="42.0" y="68.6" width="7.0" height="1" fill="#9a6a78" opacity="0.47"/><rect x="42.0" y="70.8" width="7.0" height="1" fill="#9a6a78" opacity="0.58"/><rect x="42.0" y="73.0" width="7.0" height="1" fill="#9a6a78" opacity="0.73"/><rect x="42.0" y="75.2" width="7.0" height="1" fill="#9a6a78" opacity="0.72"/><rect x="42.0" y="77.4" width="7.0" height="1" fill="#9a6a78" opacity="0.53"/><rect x="42.0" y="79.6" width="7.0" height="1" fill="#9a6a78" opacity="0.49"/><rect x="42.0" y="81.8" width="7.0" height="1" fill="#9a6a78" opacity="0.65"/><rect x="52.0" y="62.0" width="7.0" height="1" fill="#9a6a78" opacity="0.69"/><rect x="52.0" y="64.2" width="7.0" height="1" fill="#9a6a78" opacity="0.67"/><rect x="52.0" y="66.4" width="7.0" height="1" fill="#9a6a78" opacity="0.48"/><rect x="52.0" y="68.6" width="7.0" height="1" fill="#9a6a78" opacity="0.45"/><rect x="52.0" y="70.8" width="5.0" height="1" fill="#9a6a78" opacity="0.46"/><rect x="52.0" y="73.0" width="3.1" height="1" fill="#9a6a78" opacity="0.71"/><rect x="52.0" y="75.2" width="7.0" height="1" fill="#9a6a78" opacity="0.46"/><rect x="52.0" y="77.4" width="7.0" height="1" fill="#9a6a78" opacity="0.49"/><rect x="52.0" y="79.6" width="7.0" height="1" fill="#9a6a78" opacity="0.65"/><rect x="52.0" y="81.8" width="7.0" height="1" fill="#9a6a78" opacity="0.74"/><rect x="62.0" y="62.0" width="7.0" height="1" fill="#9a6a78" opacity="0.69"/><rect x="62.0" y="64.2" width="4.9" height="1" fill="#9a6a78" opacity="0.60"/><rect x="62.0" y="66.4" width="7.0" height="1" fill="#9a6a78" opacity="0.48"/><rect x="62.0" y="68.6" width="7.0" height="1" fill="#9a6a78" opacity="0.73"/><rect x="62.0" y="70.8" width="3.7" height="1" fill="#9a6a78" opacity="0.62"/><rect x="62.0" y="73.0" width="7.0" height="1" fill="#9a6a78" opacity="0.52"/><rect x="62.0" y="75.2" width="7.0" height="1" fill="#9a6a78" opacity="0.52"/><rect x="62.0" y="77.4" width="7.0" height="1" fill="#9a6a78" opacity="0.68"/><rect x="62.0" y="79.6" width="7.0" height="1" fill="#9a6a78" opacity="0.56"/><rect x="62.0" y="81.8" width="7.0" height="1" fill="#9a6a78" opacity="0.56"/><rect x="72.0" y="62.0" width="7.0" height="1" fill="#9a6a78" opacity="0.47"/><rect x="72.0" y="64.2" width="7.0" height="1" fill="#9a6a78" opacity="0.74"/><rect x="72.0" y="66.4" width="7.0" height="1" fill="#9a6a78" opacity="0.67"/><rect x="72.0" y="68.6" width="7.0" height="1" fill="#9a6a78" opacity="0.66"/><rect x="72.0" y="70.8" width="7.0" height="1" fill="#9a6a78" opacity="0.65"/><rect x="72.0" y="73.0" width="7.0" height="1" fill="#9a6a78" opacity="0.60"/><rect x="72.0" y="75.2" width="7.0" height="1" fill="#9a6a78" opacity="0.72"/><rect x="72.0" y="77.4" width="3.1" height="1" fill="#9a6a78" opacity="0.67"/><rect x="72.0" y="79.6" width="7.0" height="1" fill="#9a6a78" opacity="0.61"/><rect x="72.0" y="81.8" width="7.0" height="1" fill="#9a6a78" opacity="0.67"/><rect x="80.0" y="62.0" width="7.0" height="1" fill="#9a6a78" opacity="0.53"/><rect x="80.0" y="64.2" width="7.0" height="1" fill="#9a6a78" opacity="0.63"/><rect x="80.0" y="66.4" width="7.0" height="1" fill="#9a6a78" opacity="0.52"/><rect x="80.0" y="68.6" width="7.0" height="1" fill="#9a6a78" opacity="0.74"/><rect x="80.0" y="70.8" width="7.0" height="1" fill="#9a6a78" opacity="0.66"/><rect x="80.0" y="73.0" width="7.0" height="1" fill="#9a6a78" opacity="0.71"/><rect x="80.0" y="75.2" width="7.0" height="1" fill="#9a6a78" opacity="0.53"/><rect x="80.0" y="77.4" width="7.0" height="1" fill="#9a6a78" opacity="0.46"/><rect x="80.0" y="79.6" width="7.0" height="1" fill="#9a6a78" opacity="0.56"/><rect x="80.0" y="81.8" width="7.0" height="1" fill="#9a6a78" opacity="0.56"/><rect x="35.0" y="85.0" width="50.0" height="1" fill="#b08a94" opacity="0.68"/><rect x="35.0" y="87.0" width="39.8" height="1" fill="#b08a94" opacity="0.59"/><rect x="35.0" y="89.0" width="50.0" height="1" fill="#b08a94" opacity="0.59"/><text x="89" y="12" font-size="9" font-style="italic" font-family="Liberation Serif" fill="#6a3040" opacity="0.85">Chopard</text><path d="M88 57L94 28L103 22L117 17L118 30L108 46z" fill="#5a2028"/><circle cx="103" cy="35" r="10" fill="#b87880"/><circle cx="103" cy="35" r="8" fill="#6a2830"/><circle cx="103" cy="35" r="1" fill="#d0a0a8"/><rect x="96" y="53" width="12" height="18" fill="#a87078"/><rect x="98" y="56" width="8" height="10" fill="#7a4048"/><rect x="89.0" y="73.0" width="29.0" height="1" fill="#c8a0a8" opacity="0.70"/><rect x="89.0" y="75.0" width="29.0" height="1" fill="#c8a0a8" opacity="0.59"/><rect x="89.0" y="77.0" width="29.0" height="1" fill="#c8a0a8" opacity="0.71"/><rect x="89.0" y="79.0" width="29.0" height="1" fill="#c8a0a8" opacity="0.67"/><rect x="89.0" y="81.0" width="29.0" height="1" fill="#c8a0a8" opacity="0.59"/><rect x="122" y="0" width="1.5" height="95" fill="#b8a8b0"/><rect x="0" y="93" width="127" height="23" fill="#f4e8f0"/><rect x="0" y="95" width="40" height="1.5" fill="#e030e0"/><rect x="75" y="95" width="52" height="1.5" fill="#e030e0"/><rect x="0" y="97" width="127" height="6" fill="#88f0d8"/><rect x="10" y="97" width="30" height="1" fill="#f0f0f0"/><rect x="0" y="104" width="127" height="1" fill="#f0c8f0"/><rect x="0" y="106" width="127" height="2" fill="#e8e0f0"/><rect x="0" y="109" width="127" height="1" fill="#f8e0e8"/><rect x="0" y="111" width="127" height="2" fill="#ece8f4"/><rect x="0" y="113" width="127" height="3" fill="#d8d0c8"/><rect x="25" y="114" width="75" height="1.5" fill="#b8b040"/><rect x="48" y="114" width="37" height="1.5" fill="#40a890"/></svg></div>
  <div class="lbl" style="left:11px;top:357px">fence</div>
  <div class="lbl" style="left:144px;top:357px">light_corona3</div>
  <div class="a" style="left:12px;top:373px;width:126px;height:126px;background:#241a14;overflow:hidden">
   <svg width="126" height="126" viewBox="0 0 126 126">
    <defs><pattern id="fen" width="58" height="41" patternUnits="userSpaceOnUse" x="31.3" y="-1.7">
     <path d="M-29 -20.5L87 61.5M87 -20.5L-29 61.5M-29 20.5L29 -20.5M29 61.5L87 20.5M-29 20.5L29 61.5M29 -20.5L87 20.5" stroke="#4a3c32" stroke-width="5"/>
     <path d="M-29 -20.5L87 61.5M87 -20.5L-29 61.5M-29 20.5L29 -20.5M29 61.5L87 20.5M-29 20.5L29 61.5M29 -20.5L87 20.5" stroke="#7a685a" stroke-width="1.4" transform="translate(0,-1)"/>
     <circle cx="0" cy="0" r="3.5" fill="#5a4a40"/><circle cx="58" cy="0" r="3.5" fill="#5a4a40"/><circle cx="0" cy="41" r="3.5" fill="#5a4a40"/><circle cx="58" cy="41" r="3.5" fill="#5a4a40"/><circle cx="29" cy="20.5" r="3.5" fill="#5a4a40"/>
    </pattern></defs>
    <rect width="126" height="126" fill="#16100c"/>
    <rect width="126" height="126" fill="url(#fen)"/>
   </svg>
  </div>
  <div class="a" style="left:145px;top:373px;width:62px;height:62px;background:radial-gradient(circle at 48% 47%,#8e9288 0,#7a7e74 2px,#3e423a 8px,#20221e 15px,#0e0f0c 23px,#040404 30px,#000 36px)"></div>
  <div class="lbl" style="left:11px;top:509px">fog_white1</div>
  <div class="lbl" style="left:80px;top:509px">ladder_weapclip</div>
  <div class="lbl" style="left:162px;top:509px">ladder</div>
  <div class="a" style="left:12px;top:525px;width:62px;height:62px;background:#fff;border:1px solid #000;font-weight:bold;font-size:15px;line-height:18px;text-align:center;padding-top:13px">WHITE<br>FOG</div>
  <div class="a lad" style="left:81px;top:525px"><span>LADDER</span></div>
  <div class="a lad" style="left:163px;top:525px"><span>LADDER</span></div>
  <div class="lbl" style="left:11px;top:597px">glass</div>
  <div class="lbl" style="left:80px;top:597px">glass_nomarks</div>
  <div class="lbl" style="left:155px;top:597px">glass_flat</div>
  <div class="a gls" style="left:12px;top:613px"><span>GLASS</span></div>
  <div class="a gls" style="left:81px;top:613px"><span>GLASS</span></div>
  <div class="a gls" style="left:156px;top:613px"><span>GLASS</span></div>
  <div class="lbl" style="left:11px;top:684px">glass_flat_nomarks</div>
  <div class="lbl" style="left:106px;top:684px">glass2</div>
  <div class="lbl" style="left:175px;top:684px">glass2_nomarks</div>
  <div class="a gls" style="left:12px;top:701px"><span>GLASS</span></div>
  <div class="a drk" style="left:107px;top:701px"></div>
  <div class="a drk" style="left:176px;top:701px"></div>
  <div class="lbl" style="left:11px;top:772px">glass2_flat</div>
  <div class="lbl" style="left:80px;top:772px">glass2_flat_nomarks</div>
  <div class="a drk" style="left:12px;top:789px"></div>
  <div class="a drk" style="left:81px;top:789px"></div>
  <div class="lbl" style="left:11px;top:860px">glass3</div>
  <div class="a" style="left:12px;top:876px;width:249px;height:1px;background:#fff"></div>
  <div class="a" style="left:12px;top:877px;width:249px;height:24px;background:#111111"></div>
 </div>
</div>

<div class="a" style="left:269px;top:181px;width:827px;height:722px;background:#e4ecd8"></div>
<div id="vp" class="a">
<svg width="822" height="718" viewBox="272 183 822 718" style="position:absolute;left:0;top:0">
 <defs>
  <linearGradient id="sky" x1="0" y1="0" x2="1" y2="0.3"><stop offset="0" stop-color="#45474b"/><stop offset="0.6" stop-color="#4a4c50"/><stop offset="1" stop-color="#47494d"/></linearGradient>
  <radialGradient id="lit" gradientUnits="userSpaceOnUse" cx="732" cy="640" r="310" gradientTransform="translate(732 640) scale(1 1.2) translate(-732 -640)">
   <stop offset="0" stop-color="#747674"/><stop offset="0.15" stop-color="#666867"/><stop offset="0.35" stop-color="#5a5c5c"/><stop offset="0.65" stop-color="#4f5154"/><stop offset="1" stop-color="#4a4c50" stop-opacity="0"/>
  </radialGradient>
  <radialGradient id="skylit" gradientUnits="userSpaceOnUse" cx="760" cy="420" r="380" gradientTransform="translate(760 420) scale(1 0.6) translate(-760 -420)"><stop offset="0" stop-color="#54565a" stop-opacity="0.8"/><stop offset="1" stop-color="#46484c" stop-opacity="0"/></radialGradient>
  <linearGradient id="band" x1="0" y1="0" x2="0" y2="1"><stop offset="0" stop-color="#3d3d3e"/><stop offset="0.6" stop-color="#434446"/><stop offset="1" stop-color="#48494c" stop-opacity="0"/></linearGradient>
  <linearGradient id="wire" x1="0" y1="0" x2="1" y2="0"><stop offset="0" stop-color="#c06020"/><stop offset="0.05" stop-color="#c06020"/><stop offset="0.07" stop-color="#0c0705"/><stop offset="0.5" stop-color="#120b07"/><stop offset="0.93" stop-color="#0c0705"/><stop offset="0.95" stop-color="#c86a26"/><stop offset="1" stop-color="#c86a26"/></linearGradient>
  <linearGradient id="cap" x1="0" y1="0" x2="1" y2="0"><stop offset="0" stop-color="#4a6a50"/><stop offset="0.5" stop-color="#6a8a6a"/><stop offset="1" stop-color="#4a6450"/></linearGradient>
  <radialGradient id="glass" cx="0.5" cy="0.55" r="0.55"><stop offset="0" stop-color="#b8bab4"/><stop offset="0.7" stop-color="#9a9c98"/><stop offset="1" stop-color="#7a7c7a"/></radialGradient>
 </defs>
 <rect x="272" y="183" width="822" height="213" fill="url(#sky)"/>
 <rect x="272" y="183" width="822" height="213" fill="url(#skylit)"/>
 <rect x="272" y="396" width="822" height="505" fill="#4b4d51"/>
 <rect x="272" y="396" width="822" height="505" fill="url(#lit)"/>
 <rect x="272" y="396" width="822" height="34" fill="url(#band)"/>
 <!-- faint floor grid near horizon -->
 <g stroke="#393a3d" stroke-width="1" opacity="0.35"><line x1="272" y1="416.4" x2="1094" y2="413.6"/><line x1="272" y1="419.5" x2="1094" y2="416.2"/><line x1="272" y1="422.5" x2="1094" y2="418.9"/><line x1="272" y1="426.6" x2="1094" y2="422.4"/><line x1="272" y1="431.7" x2="1094" y2="426.8"/><line x1="272" y1="437.3" x2="1094" y2="431.6"/><line x1="272" y1="447.0" x2="1094" y2="440.0"/><line x1="272" y1="456.2" x2="1094" y2="447.9"/><line x1="272" y1="467.4" x2="1094" y2="457.6"/><line x1="272" y1="485.8" x2="1094" y2="473.4"/></g>
 <!-- light grid lines -->
 <g stroke="#8a8c8c" stroke-width="0.8" fill="none" opacity="0.85">
  <line x1="272" y1="442" x2="1094" y2="658" stroke="#6a6c6e"/>
  <line x1="272" y1="512" x2="1094" y2="465"/>
  <line x1="272" y1="565" x2="1094" y2="499"/>
  <line x1="272" y1="706" x2="1094" y2="589"/>
  <line x1="272" y1="697" x2="401" y2="901"/>
  <line x1="923" y1="475" x2="1094" y2="489"/>
  <line x1="1023" y1="525" x2="1094" y2="535"/>
 </g>
 <!-- black lines -->
 <g stroke="#111" stroke-width="1.2" fill="none">
  <polyline points="272,330 700,343 930,350 1094,340"/>
  <line x1="272" y1="420" x2="1025" y2="525"/>
  <line x1="892" y1="477" x2="1094" y2="465"/>
  <line x1="272" y1="512" x2="395" y2="505"/>
 </g>
 <path d="M924 395c2-3 6-3 8 0" stroke="#111" fill="none"/>
 <!-- wall -->
 <path d="M1093 188L1051 901H1094V183z" fill="#878a8f"/>
 <path d="M1093 396L1051 901H1094V396z" fill="#878a8f"/>
 <path d="M1060 183Q1080 185 1093 188L1051 901" stroke="#22cc22" stroke-width="1.6" fill="none"/>
 <!-- wire -->
 <rect x="732" y="183" width="20" height="305" fill="url(#wire)"/>
 <g stroke="#a89888" stroke-width="0.5" opacity="0.7"><line x1="736.5" y1="190" x2="735.5" y2="260"/><line x1="749" y1="183" x2="749" y2="191"/><line x1="748.5" y1="230" x2="748" y2="255"/><line x1="742.5" y1="243" x2="742.5" y2="255"/><line x1="737" y1="300" x2="738" y2="420"/><line x1="745" y1="330" x2="746" y2="470"/></g>
 <line x1="698" y1="488" x2="792" y2="488" stroke="#111" stroke-width="1"/>
 <!-- bounding brackets -->
 <g stroke="#e8e8e8" stroke-width="1" fill="none">
  <path d="M677 518h-26v48"/><path d="M806 523h26v48"/>
  <path d="M651 660v45l12 7"/><path d="M700 732l20 8 27-5M720 700v40"/>
  <path d="M829 671v45l-20 6M829 716l-20-10"/>
 </g>
 <g stroke-width="1" fill="none"><path d="M666 571v-19h13" stroke="#3a8a3a"/><path d="M666 552h13" stroke="#4a4ad0"/><path d="M832 556h20v25" stroke="#c03030"/><path d="M832 556h20" stroke="#4040c0"/></g>
 <!-- bulb body -->
<defs><radialGradient id="gl2" gradientUnits="userSpaceOnUse" cx="740" cy="655" r="70"><stop offset="0" stop-color="#b4b6b2"/><stop offset="0.7" stop-color="#a2a4a0"/><stop offset="1" stop-color="#8a8c8a"/></radialGradient></defs>
<polygon points="715.0,570.0 697.5,600.0 680.5,631.0 677.0,657.0 689.5,687.0 705.5,703.0 726.5,712.0 739.5,713.0 752.5,712.0 773.5,703.0 789.5,687.0 802.0,657.0 798.5,631.0 781.5,600.0 764.0,570.0" fill="url(#gl2)" opacity="0.88"/>
<g fill="#6a6c68" opacity="0.7"><path d="M698 617l30-1v9l-30 1z"/><path d="M704 625h11v58h-11z"/><path d="M686 620l8-6 4 14-8 8z"/><path d="M684 640h6v25h-6z"/><path d="M776 618h11v45h-11z"/><path d="M766 663h24v10h-24z"/><path d="M740 667h13v20h-13z"/><path d="M718 690h10v12h-10z"/></g>
<path d="M761.8 526.1 L761.8 570.1 L761.8 569.1 L777.8 598.5 L793.3 628.9 L796.5 654.8 L785.1 685.2 L770.5 701.8 L751.3 711.5 M755.2 525.4 L755.2 569.4 L755.2 568.4 L766.5 597.3 L777.4 627.2 L779.6 652.9 L771.6 683.7 L761.3 700.8 L747.9 711.2 M745.5 525.0 L745.5 569.0 L745.5 568.0 L749.8 596.5 L754.0 626.1 L754.9 651.9 L751.8 682.9 L747.9 700.2 L742.7 710.9 M734.6 525.0 L734.6 569.0 L734.6 568.0 L731.2 596.5 L727.8 626.1 L727.1 651.8 L729.6 682.8 L732.7 700.2 L736.9 710.9 M724.7 525.3 L724.7 569.3 L724.7 568.3 L714.1 597.2 L703.9 627.0 L701.7 652.8 L709.3 683.6 L719.0 700.7 L731.6 711.1 M717.7 526.1 L717.7 570.1 L717.7 569.1 L702.1 598.4 L687.0 628.7 L683.9 654.6 L695.0 685.1 L709.2 701.7 L727.9 711.5 M715.0 526.9 L715.0 570.9 L715.0 569.9 L697.5 599.9 L680.5 630.9 L677.0 656.9 L689.5 686.9 L705.5 702.9 L726.5 712.0" stroke="#bfe4ff" stroke-width="1" fill="none" opacity="0.45"/>
<path d="M715.0 527.0A24.5 2.1 0 1 0 764.0 527.0A24.5 2.1 0 1 0 715.0 527.0 M715.0 571.0A24.5 2.1 0 1 0 764.0 571.0A24.5 2.1 0 1 0 715.0 571.0 M715.0 570.0A24.5 2.1 0 1 0 764.0 570.0A24.5 2.1 0 1 0 715.0 570.0 M697.5 600.0A42.0 3.6 0 1 0 781.5 600.0A42.0 3.6 0 1 0 697.5 600.0 M680.5 631.0A59.0 5.0 0 1 0 798.5 631.0A59.0 5.0 0 1 0 680.5 631.0 M677.0 657.0A62.5 5.3 0 1 0 802.0 657.0A62.5 5.3 0 1 0 677.0 657.0 M689.5 687.0A50.0 4.2 0 1 0 789.5 687.0A50.0 4.2 0 1 0 689.5 687.0 M705.5 703.0A34.0 2.9 0 1 0 773.5 703.0A34.0 2.9 0 1 0 705.5 703.0 M726.5 712.0A13.0 1.1 0 1 0 752.5 712.0A13.0 1.1 0 1 0 726.5 712.0 M744.4 529.0 L744.4 573.0 L744.4 572.0 L747.8 603.5 L751.2 635.9 L751.9 662.2 L749.4 691.2 L746.3 705.8 L742.1 713.1 M754.3 528.7 L754.3 572.7 L754.3 571.7 L764.9 602.8 L775.1 635.0 L777.3 661.2 L769.7 690.4 L760.0 705.3 L747.4 712.9 M761.3 527.9 L761.3 571.9 L761.3 570.9 L776.9 601.6 L792.0 633.3 L795.1 659.4 L784.0 688.9 L769.8 704.3 L751.1 712.5 M764.0 527.1 L764.0 571.1 L764.0 570.1 L781.5 600.1 L798.5 631.1 L802.0 657.1 L789.5 687.1 L773.5 703.1 L752.5 712.0 M717.2 527.9 L717.2 571.9 L717.2 570.9 L701.2 601.5 L685.7 633.1 L682.5 659.2 L693.9 688.8 L708.5 704.2 L727.7 712.5 M723.8 528.6 L723.8 572.6 L723.8 571.6 L712.5 602.7 L701.6 634.8 L699.4 661.1 L707.4 690.3 L717.7 705.2 L731.1 712.8 M733.5 529.0 L733.5 573.0 L733.5 572.0 L729.2 603.5 L725.0 635.9 L724.1 662.1 L727.2 691.1 L731.1 705.8 L736.3 713.1" stroke="#bfe4ff" stroke-width="1" fill="none" opacity="0.95"/>
<path d="M710.0 495Q740 480 769.0 495V527H710.0z" fill="#5e7a5e"/>
<g fill="#4e6a50" opacity="0.6"><rect x="712" y="498" width="6" height="28"/><rect x="762" y="498" width="6" height="28"/></g>
<path d="M710.0 495A29.5 4 0 1 0 769.0 495A29.5 4 0 1 0 710.0 495 M710.0 527A29.5 4 0 1 0 769.0 527 M739.5 499.0V531.0 M740 485L739.5 499.0 M752.3 498.6V530.6 M740 485L752.3 498.6 M762.6 497.5V529.5 M740 485L762.6 497.5 M768.3 495.9V527.9 M740 485L768.3 495.9 M740 485L768.3 494.1 M740 485L762.6 492.5 M740 485L752.3 491.4 M740 485L739.5 491.0 M740 485L726.7 491.4 M740 485L716.4 492.5 M740 485L710.7 494.1 M710.7 495.9V527.9 M740 485L710.7 495.9 M716.4 497.5V529.5 M740 485L716.4 497.5 M726.7 498.6V530.6 M740 485L726.7 498.6" stroke="#bfe4ff" stroke-width="1" fill="none"/>
<!-- neck short brackets -->
 <path d="M705 531l45 2M720 532v40" stroke="#f0f0f0" fill="none"/>
 <!-- gizmo -->
 <line x1="740" y1="600" x2="740" y2="690" stroke="#3020a0" stroke-width="1.5"/>
 <path d="M740 570l-7 37h14z" fill="#3a2ab0"/>
 <text x="737" y="568" font-size="10" font-family="Liberation Sans" fill="#3a2ab0" font-weight="bold">z</text>
 <line x1="685" y1="683" x2="720" y2="701" stroke="#f0a050" stroke-width="1.2"/>
 <path d="M668 678l18 3-2 8z" fill="#2a6a3a"/><circle cx="685" cy="684" r="3.5" fill="#143a1c"/>
 <text x="664" y="672" font-size="10" font-family="Liberation Sans" fill="#f0a050" font-weight="bold">y</text>
 <line x1="760" y1="703" x2="820" y2="690" stroke="#a01818" stroke-width="1.3"/>
 <path d="M820 684l27 3-26 9z" fill="#a81818"/><circle cx="820" cy="690" r="4" fill="#6a0a0a"/>
 <text x="846" y="687" font-size="10" font-family="Liberation Sans" fill="#b01818">x</text>
 <g stroke-width="1" fill="none"><path d="M760 668l17-2" stroke="#2a8a2a"/><path d="M777 666l10 5" stroke="#c03030"/></g>
 <!-- corner axis -->
 <line x1="297.5" y1="851" x2="297.5" y2="875" stroke="#22208a" stroke-width="1"/><path d="M297.5 875L318.5 874" stroke="#801818" stroke-width="1.3"/><path d="M297.5 875L285 872" stroke="#1a4a28" stroke-width="1"/>
 <text x="296" y="849" font-size="9" font-weight="bold" font-family="Liberation Sans" fill="#22208a">z</text>
 <text x="284" y="873" font-size="10" font-weight="bold" font-family="Liberation Sans" fill="#1a4a28">y</text>
 <text x="318" y="872" font-size="10" font-family="Liberation Sans" fill="#801818">x</text>
</svg>
<div class="a" style="left:4px;top:1px;color:#d0d0d0;font-weight:bold;font-size:13px;letter-spacing:0.2px">Perspective</div>
</div>

<!-- right panel -->
<div class="a" style="left:1096px;top:181px;width:184px;height:1px;background:#fff"></div>
<div class="a" style="left:1100px;top:442px;width:1px;height:460px;background:#aca899"></div>
<div class="a" style="left:1101px;top:442px;width:1px;height:460px;background:#fff"></div>
<!-- command panel tabs -->
<div class="a" style="left:1099px;top:208px;width:181px;height:1px;background:#fff"></div>
<div class="a rtab" style="left:1099px"></div>
<div class="a rtab" style="left:1128px;top:183px;height:26px;background:#ECE9D8;border-color:#fff #aca899 #ECE9D8 #fff;z-index:1"></div>
<div class="a rtab" style="left:1157px"></div>
<div class="a rtab" style="left:1186px"></div>
<div class="a rtab" style="left:1215px"></div>
<div class="a rtab" style="left:1244px"></div>
<svg class="a" style="left:1099px;top:183px;z-index:2" width="181" height="25" viewBox="1099 183 181 25">
 <defs><radialGradient id="rw" cx="0.5" cy="0.5" r="0.5"><stop offset="0" stop-color="#f0f0f0"/><stop offset="1" stop-color="#888"/></radialGradient></defs>
 <!-- create star cursor -->
 <path d="M1103 192l5-2 3-4 3 4 5 1-3 4 1 5-5-1-4 3-1-5z" fill="url(#rw)" stroke="#555" stroke-width="0.8"/>
 <path d="M1114 195l9 8-3 0.5 2 3.5-1.5 1-2-3.5-2.5 2z" fill="#fff" stroke="#333" stroke-width="0.9"/>
 <!-- modify -->
 <path d="M1132.5 205.5v-18h18v18z" fill="none" stroke="#555" stroke-width="1"/>
 <path d="M1134 205c1-10 7-16 17-17" stroke="#2a2a50" stroke-width="5" fill="none"/><path d="M1134 205c1-10 7-16 17-17" stroke="#8a90c8" stroke-width="2" fill="none"/>
 <!-- hierarchy -->
 <g fill="#e0e0e8" stroke="#444" stroke-width="1"><rect x="1166.5" y="186.5" width="6" height="6"/><rect x="1160.5" y="199.5" width="5" height="5"/><rect x="1167" y="199.5" width="5" height="5"/><rect x="1173.5" y="199.5" width="5" height="5"/></g>
 <path d="M1169.5 192.5v7M1163 199.5v-3h13v3" fill="none" stroke="#444" stroke-width="1.2"/>
 <!-- motion wheel -->
 <circle cx="1199" cy="196" r="10" fill="#555"/><circle cx="1201" cy="196" r="9" fill="#333"/><circle cx="1201" cy="196" r="6.5" fill="#d8d8d8" stroke="#222"/><g stroke="#555" stroke-width="0.8"><path d="M1201 190v12M1195 196h12M1197 192l8 8M1205 192l-8 8"/></g><circle cx="1201" cy="196" r="1.6" fill="#d02020"/>
 <!-- display -->
 <rect x="1218" y="187" width="21" height="16" rx="2" fill="#222"/><rect x="1220.5" y="189.5" width="16" height="11" fill="#f4f4f4"/><path d="M1227 199l4-8 4 8z" fill="#e02020"/><rect x="1222" y="191" width="4" height="8" fill="#3a5ac0" opacity="0.8"/><rect x="1222" y="203" width="13" height="2" fill="#333"/><rect x="1228" y="203" width="2" height="1" fill="#3c3"/>
 <!-- utility hammer -->
 <path d="M1250 188h13l3 2v3h-3l-2-1h-2v-4z" fill="#222"/><path d="M1250 188l-1 3h4l1-3z" fill="#444"/><rect x="1255" y="192" width="4" height="14" fill="#222"/><rect x="1256" y="193" width="2" height="9" fill="#c03030"/>
</svg>
<!-- name field -->
<div class="a" style="left:1105px;top:215px;width:145px;height:18px;background:#fff;border:1px solid;border-color:#000 #fff #fff #000;box-shadow:inset 1px 1px 0 #716f64"></div>
<div class="a" style="left:1108px;top:217px">Sphere01</div>
<div class="a" style="left:1254px;top:215px;width:16px;height:18px;background:#9cb4dc;border:1px solid;border-color:#ECE9D8 #fff #fff #ECE9D8"></div>
<!-- modifier list -->
<div class="a" style="left:1105px;top:239px;width:166px;height:23px;background:#fff;border:1px solid;border-color:#716f64 #fff #fff #716f64;box-shadow:inset 1px 1px 0 #aca899"></div>
<div class="a" style="left:1109px;top:244px">Modifier List</div>
<div class="a" style="left:1253px;top:241px;width:16px;height:19px;background:#ECE9D8;border:1px solid;border-color:#fff #716f64 #716f64 #fff"></div>
<svg class="a" style="left:1257px;top:249px" width="9" height="5"><path d="M0 0h8l-4 4z" fill="#000"/></svg>
<!-- stack -->
<div class="a" style="left:1105px;top:267px;width:164px;height:126px;background:#fff;border:1px solid;border-color:#716f64 #fff #fff #716f64;box-shadow:inset 1px 1px 0 #aca899"></div>
<div class="a" style="left:1107px;top:269px;width:160px;height:16px;background:#8c9a7c"></div>
<div class="a" style="left:1107px;top:285px;width:160px;height:1px;background:#aca899"></div>
<div class="a" style="left:1107px;top:301px;width:160px;height:1px;background:#aca899"></div>
<div class="a" style="left:1107px;top:317px;width:160px;height:1px;background:#aca899"></div>
<div class="a" style="left:1149px;top:271px">Optimize</div>
<div class="a" style="left:1149px;top:287px">Edit Mesh</div>
<div class="a" style="left:1129px;top:303px">Sphere</div>
<svg class="a" style="left:1112px;top:269px" width="40" height="32" viewBox="1112 269 40 32">
 <g fill="#fff" stroke="#111" stroke-width="1"><circle cx="1120" cy="275.5" r="4.3"/><circle cx="1120" cy="291.5" r="4.3"/><rect x="1118" y="280" width="4" height="4"/><rect x="1118" y="296" width="4" height="4"/></g>
 <path d="M1118 282h4M1118 298h4M1119.5 274l1.5 1.5-1.5 1.5M1119.5 290l1.5 1.5-1.5 1.5" stroke="#111" stroke-width="0.8" fill="none"/>
 <rect x="1133" y="288" width="9" height="9" fill="#111"/><path d="M1137.5 290v5M1135 292.5h5" stroke="#fff" stroke-width="1.2"/>
</svg>
<!-- stack buttons -->
<svg class="a" style="left:1100px;top:398px" width="180" height="26" viewBox="1100 398 180 26">
 <path d="M1112 409h8" stroke="#111" stroke-width="1.6"/>
 <path d="M1120 405.5h2l1 1.5h3v4.5h-3l-1 1.5h-2z" fill="#c8c8c8" stroke="#111" stroke-width="1.2"/><rect x="1125.5" y="405" width="2" height="8" fill="#111"/>
 <line x1="1138.5" y1="401" x2="1138.5" y2="417" stroke="#aca899"/><line x1="1139.5" y1="401" x2="1139.5" y2="417" stroke="#fff"/>
 <path d="M1144.5 421v-23h23" fill="none" stroke="#aca899"/><path d="M1167.5 398v23h-23" fill="none" stroke="#fff"/>
 <path d="M1153.5 404.5h3v12h-2v-9l-1-1.5zM1161 404.5h-3v12h2v-9l1-1.5z" fill="#fff" stroke="#111" stroke-width="1.1"/>
 <line x1="1174.5" y1="401" x2="1174.5" y2="417" stroke="#aca899"/><line x1="1175.5" y1="401" x2="1175.5" y2="417" stroke="#fff"/>
 <path d="M1185 403.5l6 7.5M1199 403.5l-6 7.5" stroke="#8a8a98" stroke-width="1" stroke-dasharray="1.5 1"/><circle cx="1192" cy="413.3" r="2.3" fill="#fff" stroke="#8a8a98"/>
 <path d="M1211.5 409v5c0 2 8 2 8 0v-5z" fill="#fff" stroke="#111" stroke-width="1.3"/><ellipse cx="1215.5" cy="409" rx="4" ry="1.6" fill="#fff" stroke="#111" stroke-width="1.2"/><path d="M1212 407c0-3 5-4 7-2" fill="none" stroke="#111" stroke-width="1.2"/>
 <line x1="1234.5" y1="401" x2="1234.5" y2="417" stroke="#aca899"/><line x1="1235.5" y1="401" x2="1235.5" y2="417" stroke="#fff"/>
 <rect x="1245" y="403.5" width="15" height="13" fill="#fff" stroke="#1a2aa8" stroke-width="1.2"/><rect x="1245" y="403.5" width="15" height="2.5" fill="#1a2aa8"/>
 <g fill="#666"><rect x="1247" y="408" width="2" height="2"/><rect x="1251" y="408" width="2" height="2"/><rect x="1255" y="408" width="2" height="2"/><rect x="1249" y="410" width="2" height="2"/><rect x="1253" y="410" width="2" height="2"/><rect x="1257" y="410" width="2" height="2"/><rect x="1247" y="412" width="2" height="2"/><rect x="1251" y="412" width="2" height="2"/><rect x="1255" y="412" width="2" height="2"/><rect x="1249" y="414" width="2" height="2"/><rect x="1253" y="414" width="2" height="2"/><rect x="1257" y="414" width="2" height="2"/></g>
</svg>
<div class="a" style="left:1101px;top:433px;width:174px;height:2px;background:#111"></div>
<div class="a" style="left:1101px;top:442px;width:179px;height:1px;background:#aca899"></div>
<!-- rollout -->
<div class="a" style="left:1102px;top:443px;width:167px;height:454px;border:1px solid;border-color:#aca899 #fff #fff #aca899"></div>
<div class="a" style="left:1269px;top:443px;width:5px;height:453px;background:#aca899"></div>
<div class="a" style="left:1269px;top:884px;width:5px;height:12px;background:#000"></div>
<div class="a" style="left:1103px;top:455px;width:1px;height:441px;background:#aca899"></div>
<div class="a" style="left:1104px;top:455px;width:1px;height:441px;background:#fff"></div>
<div class="a" style="left:1108px;top:447px;width:156px;height:15px;border:1px solid;border-color:#fff #aca899 #aca899 #fff"></div>
<div class="a" style="left:1113px;top:448px">-</div>
<div class="a" style="left:1160px;top:448px">Parameters</div>
<!-- groups -->
<div class="a grp" style="top:472px;height:45px"></div>
<div class="a glbl" style="top:467px">Level of Detail:</div>
<div class="a" style="left:1128px;top:492px">Viewports:</div>
<svg class="a" style="left:1184px;top:492px" width="40" height="12"><circle cx="5.5" cy="6" r="4.5" fill="#fff" stroke="#aca899"/><circle cx="39" cy="6" r="4.5" fill="#fff" stroke="#aca899"/><circle cx="39" cy="6" r="2" fill="#000"/></svg>
<svg class="a" style="left:1217px;top:492px" width="14" height="12"><circle cx="6" cy="6" r="4.5" fill="#fff" stroke="#aca899"/><circle cx="6" cy="6" r="2" fill="#000"/></svg>
<div class="a" style="left:1201px;top:492px">L1</div>
<div class="a" style="left:1236px;top:492px">L2</div>
<div class="a grp" style="top:526px;height:131px"></div>
<div class="a glbl" style="top:520px">Optimize:</div>
<div class="a rl" style="top:542px">Face Thresh:</div>
<div class="a sp" style="top:541px"></div><div class="a spv" style="top:542px">0.0</div>
<div class="a rl" style="top:563px">Edge Thresh:</div>
<div class="a sp" style="top:562px"></div><div class="a spv" style="top:563px">1.0</div>
<div class="a rl" style="top:585px">Bias:</div>
<div class="a sp" style="top:584px"></div><div class="a spv" style="top:585px">0.1</div>
<div class="a rl" style="top:607px">Max Edge Len:</div>
<div class="a sp" style="top:606px"></div><div class="a spv" style="top:607px">0.0</div>
<svg class="a" style="left:1243px;top:541px" width="12" height="80">
 <g fill="#000"><path d="M3 6l3-4 3 4zM3 8h6l-3 4z"/><path d="M3 27l3-4 3 4zM3 29h6l-3 4z"/><path d="M3 49l3-4 3 4zM3 51h6l-3 4z"/><path d="M3 71l3-4 3 4zM3 73h6l-3 4z"/></g>
</svg>
<div class="a cb" style="left:1132px;top:633px"></div>
<div class="a" style="left:1150px;top:633px">Auto Edge</div>
<div class="a grp" style="top:666px;height:61px"></div>
<div class="a glbl" style="top:660px">Preserve:</div>
<div class="a cb" style="left:1132px;top:683px"></div><svg class="a" style="left:1133px;top:684px" width="11" height="11"><path d="M2 5l2.5 3 5-6" stroke="#000" stroke-width="2" fill="none"/></svg>
<div class="a" style="left:1150px;top:683px">Material Boundaries</div>
<div class="a cb" style="left:1132px;top:704px"></div><svg class="a" style="left:1133px;top:705px" width="11" height="11"><path d="M2 5l2.5 3 5-6" stroke="#000" stroke-width="2" fill="none"/></svg>
<div class="a" style="left:1150px;top:704px">Smooth Boundaries</div>
<div class="a grp" style="top:736px;height:61px"></div>
<div class="a glbl" style="top:730px">Update:</div>
<div class="a" style="left:1128px;top:749px;width:119px;height:19px;border:1px solid;border-color:#fff #aca899 #aca899 #fff;color:#aca899;text-align:center;line-height:17px">Update</div>
<div class="a cb" style="left:1128px;top:775px"></div>
<div class="a" style="left:1146px;top:775px">Manual Update</div>
<div class="a grp" style="top:805px;height:85px"></div>
<div class="a glbl" style="top:799px">Last Optimize Status:</div>
<div class="a" style="left:1126px;top:823px">Before/After</div>
<div class="a" style="left:1126px;top:838px;width:117px;height:2px;background:#aca899"></div>
<div class="a" style="left:1130px;top:846px">Vertices:</div>
<div class="a" style="left:1140px;top:864px">Faces:</div>
<div class="a" style="left:1096px;top:902px;width:184px;height:1px;background:#aca899"></div>

<div class="a" style="left:0;top:903px;width:1280px;height:57px;background:#ECE9D8"></div>
<div class="a" style="left:0;top:904px;width:1280px;height:1px;background:#fff"></div>
<!-- start -->
<div class="a tbtn" style="left:2px;top:907px;width:53px;height:24px"></div>
<svg class="a" style="left:4px;top:911px" width="16" height="16" viewBox="0 0 16 16">
 <path d="M1 2c2-1 4-1 6 1v5c-2-2-4-2-6-1z" fill="#f05a28"/><path d="M8 3c2-1 4-1 7 0v5c-3-1-5-1-7 0z" fill="#7cba3c"/>
 <path d="M1 8c2-1 4-1 6 1v5c-2-2-4-2-6-1z" fill="#2a8ae0"/><path d="M8 9c2-1 4-1 7 0v5c-3-1-5-1-7 0z" fill="#fcc814"/>
</svg>
<div class="a" style="left:21px;top:910px;font-weight:bold;font-size:13px;letter-spacing:0.2px">Start</div>
<!-- quick launch -->
<svg class="a" style="left:60px;top:908px" width="95" height="48" viewBox="60 908 95 48">
 <!-- ie -->
 <circle cx="71" cy="921" r="6.5" fill="#3a8ae8"/><circle cx="71" cy="921" r="3.5" fill="#fff"/><rect x="67" y="920.5" width="8" height="2" fill="#3a8ae8"/><rect x="71" y="922.5" width="6" height="2.5" fill="#ECE9D8"/>
 <path d="M64 927c-2-4 8-12 14-12" fill="none" stroke="#2a70d0" stroke-width="1.3"/>
 <!-- outlook -->
 <rect x="87" y="913" width="14" height="15" rx="1" fill="#2a6ad8"/><rect x="89" y="915" width="10" height="11" fill="#e8ecf8"/><path d="M90 920c0-4 6-4 6 0s-6 4-6 0" stroke="#2a6ad8" fill="none" stroke-width="1.4"/>
 <!-- wmp -->
 <circle cx="117" cy="920" r="7.5" fill="#f0a020"/><path d="M117 912.5a7.5 7.5 0 0 1 7.5 7.5h-7.5z" fill="#e03030"/><path d="M109.5 920a7.5 7.5 0 0 1 7.5-7.5v7.5z" fill="#40b040"/><path d="M117 927.5a7.5 7.5 0 0 1-7.5-7.5h7.5z" fill="#2a6ad8"/>
 <circle cx="117" cy="920" r="5" fill="#fff"/><path d="M115 916.5v7l5.5-3.5z" fill="#222"/>
 <!-- winamp -->
 <path d="M133 920l7-7 7 7-7 7z" fill="none" stroke="#555" stroke-width="2"/><path d="M135 925l10-10-3 6 2 0-9 6z" fill="#f09020"/>
 <!-- burn -->
 <circle cx="71" cy="943" r="7.5" fill="#fff" stroke="#d04040" stroke-width="1"/><circle cx="71" cy="943" r="6" fill="#a01818"/><path d="M66 946c0-4 3-5 4-8 1 3 5 4 5 8z" fill="#f8b020"/>
 <!-- yahoo -->
 <circle cx="94" cy="943" r="7.5" fill="#f8c818" stroke="#c08a10" stroke-width="0.8"/><circle cx="91" cy="941" r="1.2" fill="#222"/><circle cx="97" cy="941" r="1.2" fill="#222"/><path d="M89 944c1 4 9 4 10 0z" fill="#d02020"/>
 <!-- desktop -->
 <rect x="110" y="937" width="12" height="13" fill="#4a8ad8" stroke="#333" stroke-width="0.6"/><rect x="120" y="936" width="5" height="15" fill="#c8c8c8" stroke="#555" stroke-width="0.6"/><circle cx="115" cy="943" r="3" fill="none" stroke="#fff"/>
</svg>
<!-- task buttons -->
<div class="a tbtn" style="left:168px;top:907px"></div>
<div class="a tbtn" style="left:301px;top:907px"></div>
<div class="a tbtn" style="left:434px;top:907px"></div>
<div class="a tbtn" style="left:569px;top:907px"></div>
<div class="a tbtn" style="left:703px;top:907px"></div>
<div class="a tbtn" style="left:838px;top:907px"></div>
<div class="a tbtn" style="left:972px;top:907px"></div>
<div class="a tbtn" style="left:168px;top:934px"></div>
<div class="a tbtn pr" style="left:301px;top:934px"></div>
<div class="a tbtn" style="left:434px;top:934px"></div>
<div class="a tbtn" style="left:569px;top:934px"></div>
<div class="a tbtn" style="left:703px;top:934px"></div>
<div class="a tbtn" style="left:838px;top:934px"></div>
<div class="a tbtn" style="left:972px;top:934px"></div>
<div class="a tt" style="left:192px;top:912px">mIRC32 - [#rq...</div>
<div class="a tt" style="left:325px;top:912px">Total Comman...</div>
<div class="a tt" style="left:458px;top:912px">md3fix - Micro...</div>
<div class="a tt" style="left:593px;top:912px">D:\Work\md3fi...</div>
<div class="a tt" style="left:727px;top:912px">D:\Kit\DC++</div>
<div class="a tt" style="left:862px;top:912px">Media Catalog ...</div>
<div class="a tt" style="left:996px;top:912px">Jasc Paint Sho...</div>
<div class="a tt" style="left:192px;top:939px">Google Rezulta...</div>
<div class="a tt" style="left:326px;top:940px;font-weight:bold">london_lightb...</div>
<div class="a tt" style="left:458px;top:939px">XVI32 - lightbul...</div>
<div class="a tt" style="left:593px;top:939px">D:/Games/Qu...</div>
<div class="a tt" style="left:727px;top:939px">D:\Media\Vide...</div>
<div class="a tt" style="left:862px;top:939px">D:\Diverse\My ...</div>
<div class="a tt" style="left:996px;top:939px">Calculator</div>
<svg class="a" style="left:168px;top:907px" width="840" height="50" viewBox="168 907 840 50">
 <!-- mirc -->
 <rect x="174" y="911" width="14" height="16" fill="#2a2aa0"/><rect x="174" y="919" width="7" height="8" fill="#e02020"/><circle cx="185" cy="924" r="3.5" fill="#f8e020"/>
 <!-- total commander floppy -->
 <rect x="307" y="911" width="15" height="16" fill="#2a3ab0"/><rect x="309" y="917" width="11" height="9" fill="#fff"/><rect x="309" y="919" width="11" height="2" fill="#e02020"/><rect x="309" y="923" width="11" height="2" fill="#e02020"/><rect x="311" y="911" width="7" height="4" fill="#c8c8e0"/>
 <!-- md3fix -->
 <g fill="none" stroke-width="2.2"><circle cx="444" cy="919" r="3.5" stroke="#e02020"/><circle cx="452" cy="919" r="3.5" stroke="#2a8a2a"/></g><path d="M443 919l9 0" stroke="#2a2ab0" stroke-width="1.5"/>
 <!-- folder -->
 <path d="M575 914h5l2 2h8v10h-15z" fill="#f8d878" stroke="#b08830" stroke-width="0.8"/><circle cx="582" cy="921" r="3" fill="#fff" stroke="#6a8ab0"/>
 <path d="M709 914h5l2 2h8v10h-15z" fill="#f8d878" stroke="#b08830" stroke-width="0.8"/><circle cx="716" cy="921" r="3" fill="#fff" stroke="#6a8ab0"/>
 <!-- media catalog -->
 <path d="M845 911h9l3 3v13h-12z" fill="#fff" stroke="#777" stroke-width="0.8"/><circle cx="849" cy="920" r="4" fill="none" stroke="#2a6ad8" stroke-width="1.6"/>
 <!-- jasc -->
 <ellipse cx="985" cy="920" rx="7" ry="6" fill="#d8b070" stroke="#7a5030" stroke-width="0.8"/><circle cx="982" cy="918" r="1.3" fill="#e02020"/><circle cx="986" cy="917" r="1.3" fill="#2a6ad8"/><circle cx="989" cy="920" r="1.3" fill="#30a030"/><path d="M980 926l10-12" stroke="#555" stroke-width="1.4"/>
 <!-- google (ie page) -->
 <path d="M178 938h9l3 3v13h-12z" fill="#fff" stroke="#777" stroke-width="0.8"/><circle cx="179" cy="947" r="4.5" fill="#3a8ae8"/><circle cx="179" cy="947" r="2" fill="#fff"/>
 <!-- gmax -->
 <path d="M308 939l3-1 4 5 4-5 3 1-5 7v8h-4v-8z" fill="#e01010" stroke="#400" stroke-width="0.6"/>
 <!-- xvi32 -->
 <rect x="440" y="938" width="15" height="16" fill="#2a2ab0"/><g stroke="#fff" stroke-width="1"><path d="M442 942h4M449 942h4M442 946h4v4M449 946h4M449 950h4"/></g>
 <!-- games -->
 <path d="M576 940h14M583 938v16M578 944h10v3h-10z" stroke="#a01818" stroke-width="2" fill="none"/><path d="M576 940h14" stroke="#222" stroke-width="1.4"/>
 <!-- folders -->
 <path d="M709 941h5l2 2h8v10h-15z" fill="#f8d878" stroke="#b08830" stroke-width="0.8"/>
 <path d="M844 941h5l2 2h8v10h-15z" fill="#f8d878" stroke="#b08830" stroke-width="0.8"/>
 <!-- calculator -->
 <rect x="979" y="938" width="11" height="16" rx="1" fill="#8ab0e0" stroke="#4a6a9a" stroke-width="0.8"/><rect x="981" y="940" width="7" height="3" fill="#e8f0f8"/><g fill="#fff"><rect x="981" y="945" width="2" height="2"/><rect x="985" y="945" width="2" height="2"/><rect x="981" y="949" width="2" height="2"/><rect x="985" y="949" width="2" height="2"/></g>
</svg>
<!-- EN -->
<div class="a" style="left:1116px;top:925px;width:15px;height:15px;background:#3a6ad8;color:#fff;font-size:10px;line-height:15px;text-align:center">EN</div>
<div class="a" style="left:1136px;top:917px;width:1px;height:30px;background:#aca899"></div>
<div class="a" style="left:1137px;top:917px;width:1px;height:30px;background:#fff"></div>
<!-- tray -->
<div class="a" style="left:1143px;top:907px;width:135px;height:51px;border:1px solid;border-color:#aca899 #fff #fff #aca899"></div>
<div class="a" style="left:1148px;top:926px;font-weight:bold;font-size:11px">&laquo;</div>
<svg class="a" style="left:1158px;top:912px" width="40" height="40" viewBox="1158 912 40 40">
 <circle cx="1169" cy="925" r="7" fill="#f8c818" stroke="#c08a10" stroke-width="0.8"/><circle cx="1166.5" cy="923" r="1.1" fill="#222"/><circle cx="1171.5" cy="923" r="1.1" fill="#222"/><path d="M1164 926c1 4 9 4 10 0z" fill="#d02020"/>
 <path d="M1176 922l8-8 7 6-8 8z" fill="#555"/><path d="M1178 927l10-11-3 6h3l-10 6z" fill="#f09020"/>
 <rect x="1161" y="933" width="15" height="14" fill="#2a8a3a"/><path d="M1164 940a4.5 4.5 0 0 1 8-3M1173 940a4.5 4.5 0 0 1-8 3" stroke="#fff" stroke-width="1.6" fill="none"/>
 <rect x="1178" y="935" width="9" height="8" fill="#8ab8f0" stroke="#4a78b0" stroke-width="0.6"/><rect x="1183" y="939" width="9" height="8" fill="#a8c8f8" stroke="#4a78b0" stroke-width="0.6"/>
</svg>
<div class="a" style="left:1208px;top:913px;font-size:12px;letter-spacing:0.8px">12:38 AM</div>
<div class="a" style="left:1214px;top:940px;font-size:12px;letter-spacing:0.4px">Monday</div>

</body></html>
